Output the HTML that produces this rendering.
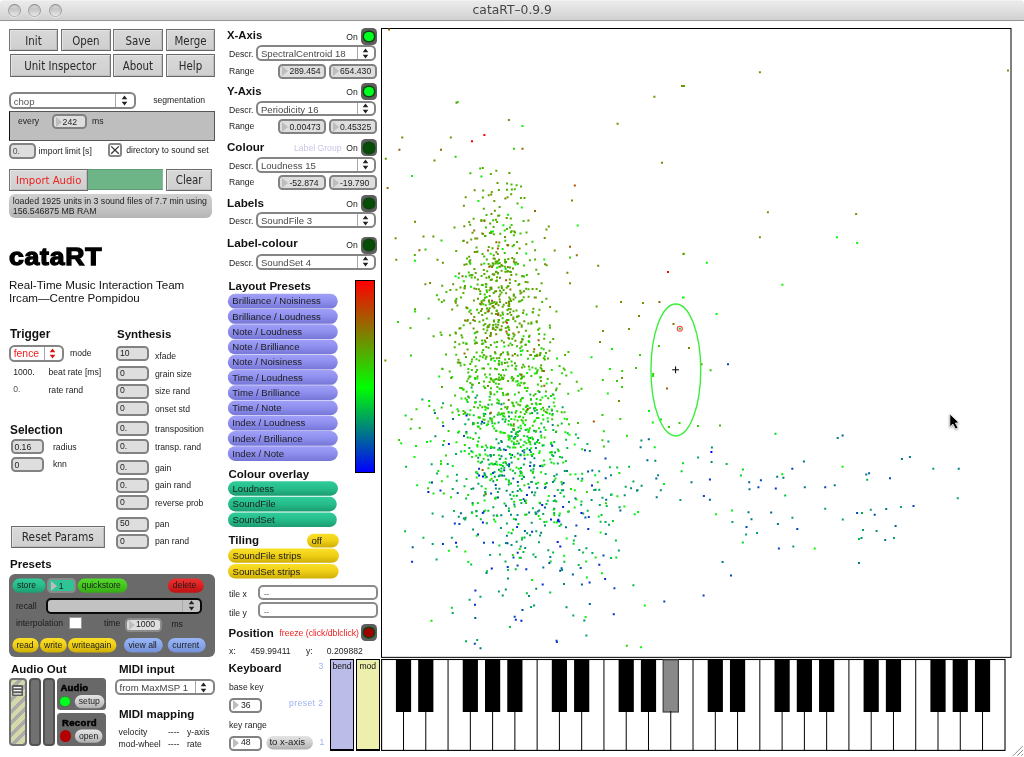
<!DOCTYPE html>
<html><head><meta charset="utf-8"><title>cataRT-0.9.9</title>
<style>
*{box-sizing:border-box;margin:0;padding:0}
html,body{width:1024px;height:757px;overflow:hidden;background:#fff}
body{position:relative;font-family:"Liberation Sans",sans-serif;color:#222}
#w{position:absolute;left:0;top:0;width:1024px;height:757px;overflow:hidden;background:#fff;will-change:transform}
#w div,#w span.t,#w svg.abs{position:absolute}
.t{white-space:nowrap}
.a{font-family:"Liberation Sans",sans-serif}
.g{font-family:"DejaVu Sans Condensed","DejaVu Sans",sans-serif}
#tb{left:0;top:0;width:1024px;height:21px;background:linear-gradient(#f6f6f6 0,#eaeaea 7%,#dfdfdf 55%,#d0d0d0 100%);border-bottom:1px solid #969696;border-radius:4px 4px 0 0}
.tl{border-radius:50%;width:13px;height:13px;top:3.8px;border:1.3px solid;border-color:#8e8e8e #9e9e9e #b4b4b4;background:radial-gradient(ellipse 50% 24% at 50% 14%,rgba(255,255,255,.4),rgba(255,255,255,0) 100%),linear-gradient(#b4b4b4,#cecece 55%,#e8e8e8);box-shadow:0 1px 0 rgba(255,255,255,.5)}
.btn{background:linear-gradient(#d9d9d9,#cfcfcf);border:1px solid #747474;border-top-color:#6a6a6a;border-bottom-color:#666;display:flex;align-items:center;justify-content:center;font-family:"DejaVu Sans Condensed","DejaVu Sans",sans-serif;white-space:nowrap;box-shadow:inset 1px 1px 0 #e4e4e4,inset -1px -1px 0 #bdbdbd}
.btn span{position:relative;top:0.5px}
.nb{background:#dedede;border:2px solid #828282;border-radius:4.5px;white-space:nowrap}
.nb span{position:absolute;top:calc(0.5px + var(--o,0px));bottom:calc(-0.5px - var(--o,0px));display:flex;align-items:center;line-height:1}
.nb .tri{position:absolute;left:2px;top:50%;margin-top:-5px;width:0;height:0;border-left:6px solid #bdbdbd;border-top:5px solid transparent;border-bottom:5px solid transparent}
.dd{background:#fff;border:2px solid #858585;border-radius:5.5px;white-space:nowrap}
.dd span{position:absolute;left:2.5px;top:1px;bottom:-1px;display:flex;align-items:center;line-height:1}
.dd b{position:absolute;right:0;top:0;bottom:0;border-left:1px solid #a8a8a8;display:block}
.dd .ar{position:absolute;left:50%;top:50%;margin:-5.5px 0 0 -4px;fill:#222}
.pill{white-space:nowrap}
.pill span{position:absolute;display:flex;align-items:center;line-height:1;color:#1c1c1c}
.led{background:#5e5e5e;border-radius:4.5px}
.led i{position:absolute;left:50%;top:50%;width:9.4px;height:9.4px;margin:-4.7px 0 0 -4.7px;border-radius:50%;display:block;box-shadow:0 0 0 1.5px rgba(0,64,0,.85)}
</style></head><body><div id="w">
<svg width="0" height="0" style="position:absolute"><defs>
<linearGradient id="pv" x1="0" y1="0" x2="0" y2="1"><stop offset="0" stop-color="#a0a0f8"/><stop offset=".5" stop-color="#8e8eee"/><stop offset="1" stop-color="#7676d6"/></linearGradient>
<linearGradient id="pg" x1="0" y1="0" x2="0" y2="1"><stop offset="0" stop-color="#30cc9a"/><stop offset=".5" stop-color="#25bd8a"/><stop offset="1" stop-color="#1c9c70"/></linearGradient>
<linearGradient id="py" x1="0" y1="0" x2="0" y2="1"><stop offset="0" stop-color="#fae028"/><stop offset=".5" stop-color="#efcf16"/><stop offset="1" stop-color="#ceae04"/></linearGradient>
<linearGradient id="pgr" x1="0" y1="0" x2="0" y2="1"><stop offset="0" stop-color="#54d82e"/><stop offset=".5" stop-color="#44c81e"/><stop offset="1" stop-color="#36aa14"/></linearGradient>
<linearGradient id="pr" x1="0" y1="0" x2="0" y2="1"><stop offset="0" stop-color="#ea3232"/><stop offset=".5" stop-color="#dc2020"/><stop offset="1" stop-color="#bc1212"/></linearGradient>
<linearGradient id="pb" x1="0" y1="0" x2="0" y2="1"><stop offset="0" stop-color="#9ab6f6"/><stop offset=".5" stop-color="#88a6ec"/><stop offset="1" stop-color="#7490d6"/></linearGradient>
<linearGradient id="pk" x1="0" y1="0" x2="0" y2="1"><stop offset="0" stop-color="#e4e4e4"/><stop offset=".5" stop-color="#cfcfcf"/><stop offset="1" stop-color="#b0b0b0"/></linearGradient>
</defs></svg>

<div id="tb"></div>
<div class="tl" style="left:7.9px"></div>
<div class="tl" style="left:28.4px"></div>
<div class="tl" style="left:48.7px"></div>
<span class="t g" style="left:472.6px;top:4.09px;font-size:12.3px;line-height:12.3px;color:#464646;font-family:'DejaVu Sans',sans-serif;">cataRT–0.9.9</span>
<div class="btn" style="left:9.0px;top:29.3px;width:49.0px;height:21.7px;"><span style="color:#2a2a2a;font-size:11.4px">Init</span></div>
<div class="btn" style="left:61.2px;top:29.3px;width:49.4px;height:21.7px;"><span style="color:#2a2a2a;font-size:11.4px">Open</span></div>
<div class="btn" style="left:113.4px;top:29.3px;width:49.2px;height:21.7px;"><span style="color:#2a2a2a;font-size:11.4px">Save</span></div>
<div class="btn" style="left:166.0px;top:29.3px;width:49.0px;height:21.7px;"><span style="color:#2a2a2a;font-size:11.4px">Merge</span></div>
<div class="btn" style="left:10.0px;top:54.3px;width:100.6px;height:23.0px;"><span style="color:#2a2a2a;font-size:11.4px">Unit Inspector</span></div>
<div class="btn" style="left:113.4px;top:54.3px;width:49.2px;height:22.5px;"><span style="color:#2a2a2a;font-size:11.4px">About</span></div>
<div class="btn" style="left:166.0px;top:54.3px;width:49.0px;height:22.5px;"><span style="color:#2a2a2a;font-size:11.4px">Help</span></div>
<div class="dd" style="left:9.2px;top:92.2px;width:127.0px;height:16.8px;"><span style="font-size:9.6px;color:#555">chop</span><b style="width:19px"><svg class="ar" width="7" height="11" viewBox="0 0 7 11"><path d="M3.5 0.6L6.3 4.2H0.7Z M3.5 10.4L6.3 6.8H0.7Z"/></svg></b></div>
<span class="t a" style="left:153.2px;top:96.48px;font-size:8.65px;line-height:8.65px;">segmentation</span>
<div class="pnl" style="left:9.0px;top:110.5px;width:206.2px;height:30.5px;background:#bebebe;border:1px solid #555;border-left-color:#111;"></div>
<span class="t a" style="left:18.0px;top:116.78px;font-size:8.65px;line-height:8.65px;">every</span>
<div class="nb" style="left:51.6px;top:114.0px;width:35.2px;height:15.3px;"><i class="tri"></i><span style="left:9px;font-size:8.65px;color:#222">242</span></div>
<span class="t a" style="left:92.0px;top:116.78px;font-size:8.65px;line-height:8.65px;">ms</span>
<div class="nb" style="left:9.2px;top:143.4px;width:26.6px;height:15.2px;"><span style="left:1.5px;font-size:8.65px;color:#555">0.</span></div>
<span class="t a" style="left:38.6px;top:147.08px;font-size:8.65px;line-height:8.65px;">import limit [s]</span>
<div class="cb" style="left:108.0px;top:143.0px;width:14.0px;height:14.3px;background:#fff;border:2px solid #868686;border-radius:3px;"><svg width="100%" height="100%" viewBox="0 0 14 14" style="position:absolute;left:-2px;top:-2px;width:14px;height:14.3px"><path d="M3.2 3.2L10.8 10.6M10.8 3.2L3.2 10.6" stroke="#333" stroke-width="1.3" fill="none"/></svg></div>
<span class="t a" style="left:126.2px;top:145.88px;font-size:8.65px;line-height:8.65px;">directory to sound set</span>
<div class="btn" style="left:9.0px;top:168.6px;width:79.4px;height:22.0px;"><span style="color:#f02020;font-size:11.2px">Import Audio</span></div>
<div class="grn" style="left:88.4px;top:169.0px;width:74.2px;height:21.2px;background:#6db487;border-top:1px solid #5f9c76;border-bottom:1px solid #5f9c76;border-right:1px solid #8ab89a;"></div>
<div class="btn" style="left:166.0px;top:168.6px;width:46.4px;height:22.0px;"><span style="color:#2a2a2a;font-size:11.4px">Clear</span></div>
<div class="st" style="left:9.0px;top:194.2px;width:203.4px;height:24.0px;background:linear-gradient(#d0d0d0,#c4c4c4 60%,#b4b4b4);border-radius:6px;"></div>
<span class="t a" style="left:12.8px;top:196.59px;font-size:8.75px;line-height:8.75px;">loaded 1925 units in 3 sound files of 7.7 min using</span>
<span class="t a" style="left:12.8px;top:207.19px;font-size:8.75px;line-height:8.75px;">156.546875 MB RAM</span>
<span class="t a" style="left:9.0px;top:245.36px;font-size:24.5px;line-height:24.5px;color:#000;font-weight:bold;-webkit-text-stroke:1.3px #000;letter-spacing:0.7px;transform-origin:0 100%;transform:scaleX(1.085);">cataRT</span>
<span class="t a" style="left:9.0px;top:278.78px;font-size:11.6px;line-height:11.6px;color:#111;">Real-Time Music Interaction Team</span>
<span class="t a" style="left:9.0px;top:292.28px;font-size:11.6px;line-height:11.6px;color:#111;">Ircam—Centre Pompidou</span>
<span class="t a" style="left:10.0px;top:328.93px;font-size:11.9px;line-height:11.9px;color:#111;font-weight:bold;">Trigger</span>
<span class="t a" style="left:117.0px;top:328.67px;font-size:11.5px;line-height:11.5px;color:#111;font-weight:bold;">Synthesis</span>
<div class="dd" style="left:9.2px;top:344.8px;width:54.4px;height:17.2px;"><span style="font-size:10.4px;color:#f02020">fence</span><b style="width:18px"><svg class="ar" width="7" height="11" viewBox="0 0 7 11"><path fill="#e01010" d="M3.5 0.6L6.3 4.2H0.7Z M3.5 10.4L6.3 6.8H0.7Z"/></svg></b></div>
<span class="t a" style="left:70.0px;top:349.28px;font-size:8.65px;line-height:8.65px;">mode</span>
<span class="t a" style="left:13.2px;top:367.68px;font-size:8.65px;line-height:8.65px;">1000.</span>
<span class="t a" style="left:48.5px;top:368.08px;font-size:8.65px;line-height:8.65px;">beat rate [ms]</span>
<span class="t a" style="left:13.2px;top:385.08px;font-size:8.65px;line-height:8.65px;color:#555;">0.</span>
<span class="t a" style="left:48.5px;top:385.68px;font-size:8.65px;line-height:8.65px;">rate rand</span>
<div class="nb" style="left:115.8px;top:346.0px;width:33.2px;height:15.0px;--o:-1px;"><span style="left:2.2px;font-size:8.65px;color:#222">10</span></div>
<span class="t a" style="left:155.0px;top:351.88px;font-size:8.65px;line-height:8.65px;">xfade</span>
<div class="nb" style="left:115.8px;top:366.0px;width:33.2px;height:15.0px;--o:-1px;"><span style="left:2.2px;font-size:8.65px;color:#222">0</span></div>
<span class="t a" style="left:155.0px;top:369.58px;font-size:8.65px;line-height:8.65px;">grain size</span>
<div class="nb" style="left:115.8px;top:383.5px;width:33.2px;height:15.0px;--o:-1px;"><span style="left:2.2px;font-size:8.65px;color:#222">0</span></div>
<span class="t a" style="left:155.0px;top:387.48px;font-size:8.65px;line-height:8.65px;">size rand</span>
<div class="nb" style="left:115.8px;top:401.0px;width:33.2px;height:15.0px;--o:-1px;"><span style="left:2.2px;font-size:8.65px;color:#222">0</span></div>
<span class="t a" style="left:155.0px;top:404.58px;font-size:8.65px;line-height:8.65px;">onset std</span>
<div class="nb" style="left:115.8px;top:421.0px;width:33.2px;height:15.0px;--o:-1px;"><span style="left:2.2px;font-size:8.65px;color:#222">0.</span></div>
<span class="t a" style="left:155.0px;top:425.28px;font-size:8.65px;line-height:8.65px;">transposition</span>
<div class="nb" style="left:115.8px;top:439.0px;width:33.2px;height:15.0px;--o:-1px;"><span style="left:2.2px;font-size:8.65px;color:#222">0.</span></div>
<span class="t a" style="left:155.0px;top:442.58px;font-size:8.65px;line-height:8.65px;">transp. rand</span>
<div class="nb" style="left:115.8px;top:460.0px;width:33.2px;height:15.0px;--o:-1px;"><span style="left:2.2px;font-size:8.65px;color:#222">0.</span></div>
<span class="t a" style="left:155.0px;top:463.88px;font-size:8.65px;line-height:8.65px;">gain</span>
<div class="nb" style="left:115.8px;top:478.0px;width:33.2px;height:15.0px;--o:-1px;"><span style="left:2.2px;font-size:8.65px;color:#222">0.</span></div>
<span class="t a" style="left:155.0px;top:481.18px;font-size:8.65px;line-height:8.65px;">gain rand</span>
<div class="nb" style="left:115.8px;top:495.0px;width:33.2px;height:15.0px;--o:-1px;"><span style="left:2.2px;font-size:8.65px;color:#222">0</span></div>
<span class="t a" style="left:155.0px;top:498.68px;font-size:8.65px;line-height:8.65px;">reverse prob</span>
<div class="nb" style="left:115.8px;top:516.5px;width:33.2px;height:15.0px;--o:-1px;"><span style="left:2.2px;font-size:8.65px;color:#222">50</span></div>
<span class="t a" style="left:155.0px;top:519.58px;font-size:8.65px;line-height:8.65px;">pan</span>
<div class="nb" style="left:115.8px;top:534.0px;width:33.2px;height:15.0px;--o:-1px;"><span style="left:2.2px;font-size:8.65px;color:#222">0</span></div>
<span class="t a" style="left:155.0px;top:537.38px;font-size:8.65px;line-height:8.65px;">pan rand</span>
<span class="t a" style="left:10.0px;top:424.57px;font-size:11.85px;line-height:11.85px;color:#111;font-weight:bold;">Selection</span>
<div class="nb" style="left:10.8px;top:439.4px;width:33.4px;height:14.8px;"><span style="left:1.6px;font-size:8.65px;color:#222">0.16</span></div>
<span class="t a" style="left:53.0px;top:443.48px;font-size:8.65px;line-height:8.65px;">radius</span>
<div class="nb" style="left:10.8px;top:457.4px;width:33.4px;height:14.8px;"><span style="left:1.6px;font-size:8.65px;color:#222">0</span></div>
<span class="t a" style="left:53.0px;top:460.48px;font-size:8.65px;line-height:8.65px;">knn</span>
<div class="btn" style="left:10.8px;top:526.0px;width:94.0px;height:21.5px;"><span style="color:#2a2a2a;font-size:11.8px">Reset Params</span></div>
<span class="t a" style="left:10.0px;top:558.67px;font-size:11.5px;line-height:11.5px;color:#111;font-weight:bold;">Presets</span>
<div class="pp" style="left:8.6px;top:573.6px;width:206.6px;height:83.6px;background:#6a6a6a;border-radius:6px;"></div>
<div class="pill" style="left:12px;top:578px;width:34px;height:15px"><svg width="34" height="15" style="position:absolute;left:0;top:0"><rect x="0.40" y="0.60" width="33.20" height="14.20" rx="7.10" fill="url(#pg)"/></svg><span style="font-size:8.65px;left:4.9px;top:0.60px;height:14.20px">store</span></div>
<div class="nb" style="left:47.2px;top:578.2px;width:28.6px;height:15.0px;background:#2fc496;border-color:#8a8a8a;"><i class="tri"></i><span style="left:9.5px;font-size:8.65px;color:#222">1</span></div>
<div class="pill" style="left:77px;top:578px;width:51px;height:15px"><svg width="51" height="15" style="position:absolute;left:0;top:0"><rect x="0.60" y="0.60" width="49.80" height="14.20" rx="7.10" fill="url(#pgr)"/></svg><span style="font-size:8.65px;left:4.6px;top:0.60px;height:14.20px">quickstore</span></div>
<div class="pill" style="left:167px;top:578px;width:37px;height:15px"><svg width="37" height="15" style="position:absolute;left:0;top:0"><rect x="0.80" y="0.60" width="36.00" height="14.20" rx="7.10" fill="url(#pr)"/></svg><span style="font-size:8.65px;left:5.8px;top:0.60px;height:14.20px">delete</span></div>
<span class="t a" style="left:16.0px;top:601.68px;font-size:8.65px;line-height:8.65px;color:#1a1a1a;">recall</span>
<div class="dd" style="left:46.4px;top:597.8px;width:155.8px;height:16.4px;background:#c2c2c2;border:2px solid #0a0a0a;border-radius:5px;"><span style="font-size:9.6px;color:#555"></span><b style="width:18px"><svg class="ar" width="7" height="11" viewBox="0 0 7 11"><path d="M3.5 0.6L6.3 4.2H0.7Z M3.5 10.4L6.3 6.8H0.7Z"/></svg></b></div>
<span class="t a" style="left:16.0px;top:619.28px;font-size:8.65px;line-height:8.65px;color:#1a1a1a;">interpolation</span>
<div class="cb2" style="left:68.6px;top:616.6px;width:13.0px;height:12.6px;background:#fff;border:1px solid #999;"></div>
<span class="t a" style="left:104.0px;top:619.28px;font-size:8.65px;line-height:8.65px;color:#1a1a1a;">time</span>
<div class="nb" style="left:125.4px;top:617.8px;width:36.4px;height:14.4px;border-color:#8c8c8c;--o:-0.8px;"><i class="tri"></i><span style="left:8.5px;font-size:8.65px;color:#222">1000</span></div>
<span class="t a" style="left:171.4px;top:620.08px;font-size:8.65px;line-height:8.65px;color:#1a1a1a;">ms</span>
<div class="pill" style="left:12px;top:638px;width:27px;height:15px"><svg width="27" height="15" style="position:absolute;left:0;top:0"><rect x="0.40" y="0.00" width="26.20" height="14.40" rx="7.20" fill="url(#py)"/></svg><span style="font-size:8.65px;left:4.4px;top:0.00px;height:14.40px">read</span></div>
<div class="pill" style="left:40px;top:638px;width:27px;height:15px"><svg width="27" height="15" style="position:absolute;left:0;top:0"><rect x="0.00" y="0.00" width="26.80" height="14.40" rx="7.20" fill="url(#py)"/></svg><span style="font-size:8.65px;left:4.0px;top:0.00px;height:14.40px">write</span></div>
<div class="pill" style="left:68px;top:638px;width:49px;height:15px"><svg width="49" height="15" style="position:absolute;left:0;top:0"><rect x="0.00" y="0.00" width="48.40" height="14.40" rx="7.20" fill="url(#py)"/></svg><span style="font-size:8.65px;left:4.0px;top:0.00px;height:14.40px">writeagain</span></div>
<div class="pill" style="left:124px;top:638px;width:39px;height:15px"><svg width="39" height="15" style="position:absolute;left:0;top:0"><rect x="0.00" y="0.00" width="38.80" height="14.40" rx="7.20" fill="url(#pb)"/></svg><span style="font-size:8.65px;left:4.5px;top:0.00px;height:14.40px">view all</span></div>
<div class="pill" style="left:167px;top:638px;width:39px;height:15px"><svg width="39" height="15" style="position:absolute;left:0;top:0"><rect x="0.80" y="0.00" width="37.80" height="14.40" rx="7.20" fill="url(#pb)"/></svg><span style="font-size:8.65px;left:5.3px;top:0.00px;height:14.40px">current</span></div>
<span class="t a" style="left:11.0px;top:663.67px;font-size:11.5px;line-height:11.5px;color:#111;font-weight:bold;">Audio Out</span>
<div class="sl" style="left:9.0px;top:678.0px;width:17.6px;height:68.0px;border:2px solid #727272;border-radius:4px;background:repeating-linear-gradient(135deg,#d5d9aa 0,#d5d9aa 4.5px,#acacaa 4.5px,#acacaa 8.1px);"></div>
<div class="slh" style="left:12.0px;top:685.0px;width:11.2px;height:11.2px;background:#5e5e5e;border-radius:1px;"><svg width="11.2" height="11.2" viewBox="0 0 11.2 11.2" style="position:absolute;left:0;top:0"><path d="M1.5 2.6H9.4M1.5 5.7H9.4M1.5 8.8H9.4" stroke="#f6f6f6" stroke-width="1.2"/></svg></div>
<div class="mt" style="left:29.2px;top:678.0px;width:12.0px;height:68.0px;background:#717171;border:2px solid #525252;border-radius:4px;"></div>
<div class="mt" style="left:43.0px;top:678.0px;width:11.8px;height:68.0px;background:#717171;border:2px solid #525252;border-radius:4px;"></div>
<div class="ap" style="left:57.3px;top:677.6px;width:48.3px;height:32.0px;background:#686868;border-radius:3.5px;"></div>
<span class="t a" style="left:60.5px;top:683.07px;font-size:9.6px;line-height:9.6px;color:#000;font-weight:bold;-webkit-text-stroke:0.5px #000;letter-spacing:0.1px;">Audio</span>
<div class="l1" style="left:59.3px;top:695.8px;width:11.4px;height:11.4px;border-radius:50%;background:#00ff1e;border:1.5px solid #3a7a3a;"></div>
<div class="pill" style="left:74px;top:695px;width:31px;height:14px"><svg width="31" height="14" style="position:absolute;left:0;top:0"><rect x="0.80" y="0.00" width="29.60" height="13.20" rx="6.60" fill="url(#pk)"/></svg><span style="font-size:8.65px;left:4.8px;top:0.00px;height:13.20px">setup</span></div>
<div class="ap" style="left:57.3px;top:712.8px;width:48.3px;height:33.2px;background:#686868;border-radius:3.5px;"></div>
<span class="t a" style="left:62.0px;top:718.07px;font-size:9.6px;line-height:9.6px;color:#000;font-weight:bold;-webkit-text-stroke:0.5px #000;letter-spacing:0.3px;">Record</span>
<div class="l2" style="left:59.6px;top:730.0px;width:11.8px;height:11.8px;border-radius:50%;background:#b40000;"></div>
<div class="pill" style="left:75px;top:729px;width:28px;height:14px"><svg width="28" height="14" style="position:absolute;left:0;top:0"><rect x="0.00" y="0.60" width="27.40" height="13.20" rx="6.60" fill="url(#pk)"/></svg><span style="font-size:8.65px;left:4.0px;top:0.60px;height:13.20px">open</span></div>
<span class="t a" style="left:119.0px;top:663.67px;font-size:11.5px;line-height:11.5px;color:#111;font-weight:bold;">MIDI input</span>
<div class="dd" style="left:115.0px;top:679.0px;width:99.6px;height:16.4px;"><span style="font-size:9.6px;color:#444">from MaxMSP 1</span><b style="width:18px"><svg class="ar" width="7" height="11" viewBox="0 0 7 11"><path d="M3.5 0.6L6.3 4.2H0.7Z M3.5 10.4L6.3 6.8H0.7Z"/></svg></b></div>
<span class="t a" style="left:119.0px;top:709.27px;font-size:11.5px;line-height:11.5px;color:#111;font-weight:bold;">MIDI mapping</span>
<span class="t a" style="left:118.6px;top:728.28px;font-size:8.65px;line-height:8.65px;">velocity</span>
<span class="t a" style="left:168.0px;top:728.28px;font-size:8.65px;line-height:8.65px;">----</span>
<span class="t a" style="left:187.0px;top:728.28px;font-size:8.65px;line-height:8.65px;">y-axis</span>
<span class="t a" style="left:118.6px;top:739.68px;font-size:8.65px;line-height:8.65px;">mod-wheel</span>
<span class="t a" style="left:168.0px;top:739.68px;font-size:8.65px;line-height:8.65px;">----</span>
<span class="t a" style="left:187.0px;top:739.68px;font-size:8.65px;line-height:8.65px;">rate</span>
<span class="t a" style="left:227.0px;top:30.23px;font-size:11.3px;line-height:11.3px;color:#111;font-weight:bold;">X-Axis</span>
<span class="t a" style="left:346.2px;top:32.68px;font-size:8.65px;line-height:8.65px;">On</span>
<div class="led" style="left:360.8px;top:27.9px;width:16.4px;height:17.1px;"><i style="background:#00ff1e"></i></div>
<span class="t a" style="left:229.0px;top:50.48px;font-size:8.65px;line-height:8.65px;">Descr.</span>
<div class="dd" style="left:256.4px;top:45.4px;width:120.0px;height:15.8px;"><span style="font-size:9.6px;color:#4a4a4a">SpectralCentroid 18</span><b style="width:17px"><svg class="ar" width="7" height="11" viewBox="0 0 7 11"><path d="M3.5 0.6L6.3 4.2H0.7Z M3.5 10.4L6.3 6.8H0.7Z"/></svg></b></div>
<span class="t a" style="left:229.0px;top:66.68px;font-size:8.65px;line-height:8.65px;">Range</span>
<div class="nb" style="left:278.4px;top:63.8px;width:47.6px;height:15.0px;text-align:right;"><i class="tri"></i><span style="left:9px;font-size:8.65px;color:#222">289.454</span></div>
<div class="nb" style="left:329.0px;top:63.8px;width:47.6px;height:15.0px;"><i class="tri"></i><span style="left:9px;font-size:8.65px;color:#222">654.430</span></div>
<span class="t a" style="left:227.0px;top:85.53px;font-size:11.3px;line-height:11.3px;color:#111;font-weight:bold;">Y-Axis</span>
<span class="t a" style="left:346.2px;top:87.98px;font-size:8.65px;line-height:8.65px;">On</span>
<div class="led" style="left:360.8px;top:83.2px;width:16.4px;height:17.1px;"><i style="background:#00ff1e"></i></div>
<span class="t a" style="left:229.0px;top:105.78px;font-size:8.65px;line-height:8.65px;">Descr.</span>
<div class="dd" style="left:256.4px;top:100.7px;width:120.0px;height:15.8px;"><span style="font-size:9.6px;color:#4a4a4a">Periodicity 16</span><b style="width:17px"><svg class="ar" width="7" height="11" viewBox="0 0 7 11"><path d="M3.5 0.6L6.3 4.2H0.7Z M3.5 10.4L6.3 6.8H0.7Z"/></svg></b></div>
<span class="t a" style="left:229.0px;top:121.98px;font-size:8.65px;line-height:8.65px;">Range</span>
<div class="nb" style="left:278.4px;top:119.1px;width:47.6px;height:15.0px;text-align:right;"><i class="tri"></i><span style="left:9px;font-size:8.65px;color:#222">0.00473</span></div>
<div class="nb" style="left:329.0px;top:119.1px;width:47.6px;height:15.0px;"><i class="tri"></i><span style="left:9px;font-size:8.65px;color:#222">0.45325</span></div>
<span class="t a" style="left:227.0px;top:141.38px;font-size:11.6px;line-height:11.6px;color:#111;font-weight:bold;">Colour</span>
<span class="t a" style="left:346.2px;top:144.08px;font-size:8.65px;line-height:8.65px;">On</span>
<div class="led" style="left:360.8px;top:139.3px;width:16.4px;height:17.1px;"><i style="background:#064d06"></i></div>
<span class="t a" style="left:229.0px;top:161.88px;font-size:8.65px;line-height:8.65px;">Descr.</span>
<div class="dd" style="left:256.4px;top:156.8px;width:120.0px;height:15.8px;"><span style="font-size:9.6px;color:#4a4a4a">Loudness 15</span><b style="width:17px"><svg class="ar" width="7" height="11" viewBox="0 0 7 11"><path d="M3.5 0.6L6.3 4.2H0.7Z M3.5 10.4L6.3 6.8H0.7Z"/></svg></b></div>
<span class="t a" style="left:229.0px;top:178.08px;font-size:8.65px;line-height:8.65px;">Range</span>
<div class="nb" style="left:278.4px;top:175.2px;width:47.6px;height:15.0px;text-align:right;"><i class="tri"></i><span style="left:9px;font-size:8.65px;color:#222">-52.874</span></div>
<div class="nb" style="left:329.0px;top:175.2px;width:47.6px;height:15.0px;"><i class="tri"></i><span style="left:9px;font-size:8.65px;color:#222">-19.790</span></div>
<span class="t a" style="left:294.0px;top:144.08px;font-size:8.65px;line-height:8.65px;color:#cbc4e4;">Label Group</span>
<span class="t a" style="left:227.0px;top:196.80px;font-size:11.7px;line-height:11.7px;color:#111;font-weight:bold;">Labels</span>
<span class="t a" style="left:346.2px;top:199.58px;font-size:8.65px;line-height:8.65px;">On</span>
<div class="led" style="left:360.8px;top:194.8px;width:16.4px;height:17.1px;"><i style="background:#064d06"></i></div>
<span class="t a" style="left:229.0px;top:217.38px;font-size:8.65px;line-height:8.65px;">Descr.</span>
<div class="dd" style="left:256.4px;top:212.3px;width:120.0px;height:15.8px;"><span style="font-size:9.6px;color:#4a4a4a">SoundFile 3</span><b style="width:17px"><svg class="ar" width="7" height="11" viewBox="0 0 7 11"><path d="M3.5 0.6L6.3 4.2H0.7Z M3.5 10.4L6.3 6.8H0.7Z"/></svg></b></div>
<span class="t a" style="left:227.0px;top:238.41px;font-size:11.8px;line-height:11.8px;color:#111;font-weight:bold;">Label-colour</span>
<span class="t a" style="left:346.2px;top:241.28px;font-size:8.65px;line-height:8.65px;">On</span>
<div class="led" style="left:360.8px;top:236.5px;width:16.4px;height:17.1px;"><i style="background:#064d06"></i></div>
<span class="t a" style="left:229.0px;top:259.08px;font-size:8.65px;line-height:8.65px;">Descr.</span>
<div class="dd" style="left:256.4px;top:254.0px;width:120.0px;height:15.8px;"><span style="font-size:9.6px;color:#4a4a4a">SoundSet 4</span><b style="width:17px"><svg class="ar" width="7" height="11" viewBox="0 0 7 11"><path d="M3.5 0.6L6.3 4.2H0.7Z M3.5 10.4L6.3 6.8H0.7Z"/></svg></b></div>
<span class="t a" style="left:228.5px;top:280.87px;font-size:11.5px;line-height:11.5px;color:#111;font-weight:bold;">Layout Presets</span>
<div class="pill" style="left:227px;top:293px;width:111px;height:16px"><svg width="111" height="16" style="position:absolute;left:0;top:0"><rect x="0.80" y="0.80" width="110.00" height="14.80" rx="7.40" fill="url(#pv)"/></svg><span style="font-size:9.6px;left:5.3px;top:0.80px;height:14.80px">Brilliance / Noisiness</span></div>
<div class="pill" style="left:227px;top:309px;width:111px;height:15px"><svg width="111" height="15" style="position:absolute;left:0;top:0"><rect x="0.80" y="0.04" width="110.00" height="14.80" rx="7.40" fill="url(#pv)"/></svg><span style="font-size:9.6px;left:5.3px;top:0.04px;height:14.80px">Brilliance / Loudness</span></div>
<div class="pill" style="left:227px;top:324px;width:111px;height:16px"><svg width="111" height="16" style="position:absolute;left:0;top:0"><rect x="0.80" y="0.28" width="110.00" height="14.80" rx="7.40" fill="url(#pv)"/></svg><span style="font-size:9.6px;left:5.3px;top:0.28px;height:14.80px">Note / Loudness</span></div>
<div class="pill" style="left:227px;top:339px;width:111px;height:16px"><svg width="111" height="16" style="position:absolute;left:0;top:0"><rect x="0.80" y="0.52" width="110.00" height="14.80" rx="7.40" fill="url(#pv)"/></svg><span style="font-size:9.6px;left:5.3px;top:0.52px;height:14.80px">Note / Brilliance</span></div>
<div class="pill" style="left:227px;top:354px;width:111px;height:16px"><svg width="111" height="16" style="position:absolute;left:0;top:0"><rect x="0.80" y="0.76" width="110.00" height="14.80" rx="7.40" fill="url(#pv)"/></svg><span style="font-size:9.6px;left:5.3px;top:0.76px;height:14.80px">Note / Noisiness</span></div>
<div class="pill" style="left:227px;top:370px;width:111px;height:15px"><svg width="111" height="15" style="position:absolute;left:0;top:0"><rect x="0.80" y="0.00" width="110.00" height="14.80" rx="7.40" fill="url(#pv)"/></svg><span style="font-size:9.6px;left:5.3px;top:0.00px;height:14.80px">Time / Loudness</span></div>
<div class="pill" style="left:227px;top:385px;width:111px;height:16px"><svg width="111" height="16" style="position:absolute;left:0;top:0"><rect x="0.80" y="0.24" width="110.00" height="14.80" rx="7.40" fill="url(#pv)"/></svg><span style="font-size:9.6px;left:5.3px;top:0.24px;height:14.80px">Time / Brilliance</span></div>
<div class="pill" style="left:227px;top:400px;width:111px;height:16px"><svg width="111" height="16" style="position:absolute;left:0;top:0"><rect x="0.80" y="0.48" width="110.00" height="14.80" rx="7.40" fill="url(#pv)"/></svg><span style="font-size:9.6px;left:5.3px;top:0.48px;height:14.80px">Time / Note</span></div>
<div class="pill" style="left:227px;top:415px;width:111px;height:16px"><svg width="111" height="16" style="position:absolute;left:0;top:0"><rect x="0.80" y="0.72" width="110.00" height="14.80" rx="7.40" fill="url(#pv)"/></svg><span style="font-size:9.6px;left:5.3px;top:0.72px;height:14.80px">Index / Loudness</span></div>
<div class="pill" style="left:227px;top:430px;width:111px;height:16px"><svg width="111" height="16" style="position:absolute;left:0;top:0"><rect x="0.80" y="0.96" width="110.00" height="14.80" rx="7.40" fill="url(#pv)"/></svg><span style="font-size:9.6px;left:5.3px;top:0.96px;height:14.80px">Index / Brilliance</span></div>
<div class="pill" style="left:227px;top:446px;width:111px;height:16px"><svg width="111" height="16" style="position:absolute;left:0;top:0"><rect x="0.80" y="0.20" width="110.00" height="14.80" rx="7.40" fill="url(#pv)"/></svg><span style="font-size:9.6px;left:5.3px;top:0.20px;height:14.80px">Index / Note</span></div>
<div class="cbar" style="left:355.2px;top:280.0px;width:19.4px;height:193.4px;border:1px solid #000;background:linear-gradient(#ff0000 0%,#00ff00 55.7%,#0000ff 100%);"></div>
<span class="t a" style="left:228.5px;top:468.87px;font-size:11.5px;line-height:11.5px;color:#111;font-weight:bold;">Colour overlay</span>
<div class="pill" style="left:228px;top:481px;width:110px;height:15px"><svg width="110" height="15" style="position:absolute;left:0;top:0"><rect x="0.00" y="0.30" width="110.00" height="14.40" rx="7.20" fill="url(#pg)"/></svg><span style="font-size:9.6px;left:4.5px;top:0.30px;height:14.40px">Loudness</span></div>
<div class="pill" style="left:228px;top:496px;width:109px;height:16px"><svg width="109" height="16" style="position:absolute;left:0;top:0"><rect x="0.00" y="0.80" width="108.80" height="14.60" rx="7.30" fill="url(#pg)"/></svg><span style="font-size:9.6px;left:4.5px;top:0.80px;height:14.60px">SoundFile</span></div>
<div class="pill" style="left:228px;top:512px;width:109px;height:15px"><svg width="109" height="15" style="position:absolute;left:0;top:0"><rect x="0.00" y="0.50" width="108.80" height="14.50" rx="7.25" fill="url(#pg)"/></svg><span style="font-size:9.6px;left:4.5px;top:0.50px;height:14.50px">SoundSet</span></div>
<span class="t a" style="left:228.5px;top:534.87px;font-size:11.5px;line-height:11.5px;color:#111;font-weight:bold;">Tiling</span>
<div class="pill" style="left:307px;top:533px;width:32px;height:15px"><svg width="32" height="15" style="position:absolute;left:0;top:0"><rect x="0.00" y="0.70" width="31.80" height="13.90" rx="6.95" fill="url(#py)"/></svg><span style="font-size:9.6px;left:4.5px;top:0.70px;height:13.90px">off</span></div>
<div class="pill" style="left:228px;top:548px;width:111px;height:15px"><svg width="111" height="15" style="position:absolute;left:0;top:0"><rect x="0.00" y="0.60" width="111.00" height="14.20" rx="7.10" fill="url(#py)"/></svg><span style="font-size:9.6px;left:4.5px;top:0.60px;height:14.20px">SoundFile strips</span></div>
<div class="pill" style="left:228px;top:564px;width:111px;height:15px"><svg width="111" height="15" style="position:absolute;left:0;top:0"><rect x="0.00" y="0.00" width="110.60" height="14.60" rx="7.30" fill="url(#py)"/></svg><span style="font-size:9.6px;left:4.5px;top:0.00px;height:14.60px">SoundSet strips</span></div>
<span class="t a" style="left:229.0px;top:590.08px;font-size:8.65px;line-height:8.65px;">tile x</span>
<div class="tb" style="left:258.4px;top:584.8px;width:119.6px;height:15.6px;background:#fff;border:2px solid #8a8a8a;border-radius:5px;"><span style="position:absolute;left:3.5px;top:3.5px;font-size:8px;line-height:8px;color:#444">--</span></div>
<span class="t a" style="left:229.0px;top:608.88px;font-size:8.65px;line-height:8.65px;">tile y</span>
<div class="tb" style="left:258.4px;top:602.4px;width:119.6px;height:15.4px;background:#fff;border:2px solid #8a8a8a;border-radius:5px;"><span style="position:absolute;left:3.5px;top:3.5px;font-size:8px;line-height:8px;color:#444">--</span></div>
<span class="t a" style="left:228.5px;top:627.87px;font-size:11.5px;line-height:11.5px;color:#111;font-weight:bold;">Position</span>
<span class="t a" style="left:279.4px;top:629.08px;font-size:8.65px;line-height:8.65px;color:#f02020;">freeze (click/dblclick)</span>
<div class="led" style="left:360.6px;top:624.2px;width:16.6px;height:16.8px;"><i style="background:#a00000"></i></div>
<span class="t a" style="left:229.0px;top:646.68px;font-size:8.65px;line-height:8.65px;">x:</span>
<span class="t a" style="left:250.5px;top:646.68px;font-size:8.65px;line-height:8.65px;">459.99411</span>
<span class="t a" style="left:306.0px;top:646.68px;font-size:8.65px;line-height:8.65px;">y:</span>
<span class="t a" style="left:326.8px;top:646.68px;font-size:8.65px;line-height:8.65px;">0.209882</span>
<span class="t a" style="left:228.5px;top:662.67px;font-size:11.5px;line-height:11.5px;color:#111;font-weight:bold;">Keyboard</span>
<span class="t a" style="left:318.4px;top:661.68px;font-size:8.65px;line-height:8.65px;color:#9db0f0;">3</span>
<span class="t a" style="left:229.0px;top:682.88px;font-size:8.65px;line-height:8.65px;">base key</span>
<div class="nb" style="left:229.0px;top:698.0px;width:33.4px;height:14.8px;background:#fff;--o:-1px;"><i class="tri"></i><span style="left:10px;font-size:8.65px;color:#222">36</span></div>
<span class="t a" style="left:289.0px;top:699.28px;font-size:8.65px;line-height:8.65px;color:#9db0f0;letter-spacing:0.4px;">preset 2</span>
<span class="t a" style="left:229.0px;top:720.88px;font-size:8.65px;line-height:8.65px;">key range</span>
<div class="nb" style="left:229.0px;top:735.8px;width:33.4px;height:14.8px;background:#fff;--o:-1px;"><i class="tri"></i><span style="left:10px;font-size:8.65px;color:#222">48</span></div>
<div class="pill" style="left:266px;top:736px;width:47px;height:14px"><svg width="47" height="14" style="position:absolute;left:0;top:0"><rect x="0.40" y="0.00" width="46.60" height="13.40" rx="6.70" fill="url(#pk)"/></svg><span style="font-size:9.6px;left:3.4px;top:-1.00px;height:13.40px">to x-axis</span></div>
<span class="t a" style="left:319.4px;top:738.28px;font-size:8.65px;line-height:8.65px;color:#9db0f0;">1</span>
<div class="bend" style="left:329.8px;top:659.2px;width:24.4px;height:91.8px;background:#bcbce8;border:1px solid #000;border-bottom-width:2px;"></div>
<span class="t a" style="left:332.4px;top:661.88px;font-size:8.65px;line-height:8.65px;color:#111;">bend</span>
<div class="mod" style="left:356.0px;top:659.2px;width:23.8px;height:91.8px;background:#ecf0ac;border:1px solid #000;border-bottom-width:2px;"></div>
<span class="t a" style="left:359.4px;top:661.88px;font-size:8.65px;line-height:8.65px;color:#111;">mod</span>
<svg class="abs" style="left:381px;top:28px" width="631" height="631" viewBox="381 28 631 631">
<rect x="381.5" y="28.5" width="629.5" height="628.85" fill="#fff" stroke="#000" stroke-width="1"/>
<path fill="#0000ff" d="M556.9 520.1h2v2h-2zM535.2 512.8h2v2h-2zM482.0 475.4h2v2h-2zM465.5 414.5h2v2h-2zM580.5 512.0h2v2h-2zM710.4 450.9h2v2h-2z"/>
<path fill="#0018e7" d="M490.8 567.5h2v2h-2zM591.0 484.4h2v2h-2zM559.3 545.4h2v2h-2zM557.3 518.7h2v2h-2zM541.2 504.0h2v2h-2zM481.9 521.5h2v2h-2zM520.4 619.8h2v2h-2zM455.0 541.7h2v2h-2zM478.1 474.4h2v2h-2zM556.7 541.1h2v2h-2zM427.4 491.1h2v2h-2zM508.2 463.3h2v2h-2zM481.1 420.7h2v2h-2z"/>
<path fill="#0030cf" d="M501.0 474.4h2v2h-2zM562.1 505.9h2v2h-2zM411.1 560.8h2v2h-2zM528.2 486.5h2v2h-2zM474.0 603.8h2v2h-2zM492.1 472.1h2v2h-2zM541.7 583.6h2v2h-2zM558.3 520.6h2v2h-2zM514.8 618.7h2v2h-2zM481.8 511.9h2v2h-2zM529.1 465.1h2v2h-2zM526.0 493.9h2v2h-2zM492.0 541.5h2v2h-2zM525.3 568.2h2v2h-2zM522.6 498.2h2v2h-2zM588.6 581.5h2v2h-2zM539.2 464.9h2v2h-2zM587.3 527.9h2v2h-2zM453.8 522.5h2v2h-2zM612.8 613.3h2v2h-2zM550.0 518.5h2v2h-2zM478.1 467.7h2v2h-2zM551.2 444.7h2v2h-2zM447.9 443.0h2v2h-2zM442.2 424.9h2v2h-2zM439.5 489.4h2v2h-2zM474.4 589.5h2v2h-2zM441.9 542.9h2v2h-2zM506.7 565.9h2v2h-2zM477.0 533.6h2v2h-2zM531.1 530.8h2v2h-2zM431.0 481.5h2v2h-2zM511.1 454.1h2v2h-2zM504.7 449.1h2v2h-2zM516.1 525.9h2v2h-2zM598.3 563.7h2v2h-2zM604.1 578.1h2v2h-2zM516.7 551.7h2v2h-2zM506.4 542.3h2v2h-2zM708.9 478.4h2v2h-2zM774.8 487.5h2v2h-2z"/>
<path fill="#0048b7" d="M604.7 477.2h2v2h-2zM521.5 609.1h2v2h-2zM613.4 587.2h2v2h-2zM512.5 556.4h2v2h-2zM482.9 510.5h2v2h-2zM483.0 541.7h2v2h-2zM516.8 481.1h2v2h-2zM555.9 641.0h2v2h-2zM548.4 561.9h2v2h-2zM519.5 454.3h2v2h-2zM602.5 554.5h2v2h-2zM555.6 639.7h2v2h-2zM497.0 496.4h2v2h-2zM584.0 449.2h2v2h-2zM490.1 492.4h2v2h-2zM513.7 615.8h2v2h-2zM562.6 482.0h2v2h-2zM458.4 523.1h2v2h-2zM503.2 469.3h2v2h-2zM553.6 494.9h2v2h-2zM530.4 481.0h2v2h-2zM463.0 435.1h2v2h-2zM587.8 515.9h2v2h-2zM473.8 642.7h2v2h-2zM574.5 497.5h2v2h-2zM523.7 457.8h2v2h-2zM528.8 449.1h2v2h-2zM495.9 514.6h2v2h-2zM489.5 454.0h2v2h-2zM579.7 567.0h2v2h-2zM587.1 470.6h2v2h-2zM516.6 564.6h2v2h-2zM559.2 569.8h2v2h-2zM494.7 484.1h2v2h-2zM533.2 464.3h2v2h-2zM575.4 524.4h2v2h-2zM471.0 511.5h2v2h-2zM604.5 457.4h2v2h-2zM702.9 495.0h2v2h-2zM727.0 363.2h2v2h-2zM889.0 477.3h2v2h-2zM791.3 467.8h2v2h-2zM824.2 486.3h2v2h-2zM759.9 479.3h2v2h-2zM757.4 486.3h2v2h-2zM856.1 511.9h2v2h-2zM873.7 513.8h2v2h-2zM912.5 505.0h2v2h-2zM796.3 528.1h2v2h-2zM777.9 547.6h2v2h-2zM745.5 526.1h2v2h-2zM730.0 574.5h2v2h-2zM702.6 594.4h2v2h-2zM663.3 600.4h2v2h-2z"/>
<path fill="#00609f" d="M560.6 567.3h2v2h-2zM584.4 516.4h2v2h-2zM514.9 518.6h2v2h-2zM474.3 617.1h2v2h-2zM591.3 469.5h2v2h-2zM498.6 447.3h2v2h-2zM571.9 573.4h2v2h-2zM523.9 530.1h2v2h-2zM411.7 546.2h2v2h-2zM544.0 506.5h2v2h-2zM485.6 476.0h2v2h-2zM512.3 477.5h2v2h-2zM533.0 407.5h2v2h-2zM475.4 471.6h2v2h-2zM508.0 465.2h2v2h-2zM543.9 487.1h2v2h-2zM512.8 437.4h2v2h-2zM524.0 499.9h2v2h-2zM588.8 602.9h2v2h-2zM459.9 512.2h2v2h-2zM521.7 450.0h2v2h-2zM580.9 583.4h2v2h-2zM605.2 498.8h2v2h-2zM456.7 492.1h2v2h-2zM505.0 504.7h2v2h-2zM841.6 434.6h2v2h-2zM610.1 493.8h2v2h-2zM655.3 477.5h2v2h-2zM748.2 481.3h2v2h-2zM894.6 524.9h2v2h-2zM647.8 438.3h2v2h-2zM646.4 459.2h2v2h-2zM770.2 511.4h2v2h-2zM708.9 498.7h2v2h-2zM619.4 509.6h2v2h-2zM868.1 472.2h2v2h-2z"/>
<path fill="#007887" d="M539.6 430.7h2v2h-2zM519.9 467.1h2v2h-2zM452.0 417.9h2v2h-2zM498.6 474.6h2v2h-2zM523.3 451.4h2v2h-2zM541.4 465.3h2v2h-2zM540.1 531.7h2v2h-2zM538.2 509.4h2v2h-2zM472.2 422.0h2v2h-2zM485.5 572.0h2v2h-2zM565.0 526.3h2v2h-2zM472.3 487.4h2v2h-2zM479.5 647.2h2v2h-2zM531.0 491.2h2v2h-2zM514.2 436.1h2v2h-2zM529.5 461.5h2v2h-2zM505.9 534.8h2v2h-2zM528.1 511.5h2v2h-2zM519.4 470.5h2v2h-2zM549.3 555.9h2v2h-2zM507.7 464.4h2v2h-2zM522.9 476.1h2v2h-2zM500.4 403.3h2v2h-2zM574.4 534.9h2v2h-2zM500.3 514.2h2v2h-2zM519.8 472.2h2v2h-2zM500.5 455.2h2v2h-2zM502.9 448.6h2v2h-2zM433.9 412.1h2v2h-2zM553.2 507.7h2v2h-2zM544.6 486.0h2v2h-2zM465.4 431.0h2v2h-2zM542.3 566.6h2v2h-2zM604.8 533.1h2v2h-2zM690.5 481.2h2v2h-2zM802.9 460.4h2v2h-2zM655.7 496.2h2v2h-2zM776.2 475.8h2v2h-2zM865.3 473.4h2v2h-2zM636.0 489.4h2v2h-2zM639.6 446.2h2v2h-2zM836.7 437.0h2v2h-2zM900.9 457.9h2v2h-2zM908.9 455.9h2v2h-2zM957.7 467.8h2v2h-2zM782.4 476.8h2v2h-2zM803.8 486.3h2v2h-2zM833.7 484.3h2v2h-2zM748.5 488.3h2v2h-2zM885.2 507.9h2v2h-2zM884.2 538.9h2v2h-2zM858.0 562.0h2v2h-2zM776.9 523.1h2v2h-2zM747.5 511.2h2v2h-2zM750.5 518.2h2v2h-2zM721.6 561.0h2v2h-2z"/>
<path fill="#00906f" d="M561.1 569.1h2v2h-2zM516.5 513.9h2v2h-2zM499.9 526.9h2v2h-2zM536.3 486.9h2v2h-2zM489.8 455.2h2v2h-2zM489.8 446.9h2v2h-2zM577.1 477.7h2v2h-2zM566.0 469.9h2v2h-2zM578.3 549.1h2v2h-2zM529.2 437.1h2v2h-2zM524.2 547.0h2v2h-2zM501.7 594.6h2v2h-2zM535.2 587.8h2v2h-2zM594.6 488.7h2v2h-2zM504.8 588.6h2v2h-2zM472.1 528.5h2v2h-2zM588.8 450.1h2v2h-2zM516.7 490.1h2v2h-2zM565.5 606.3h2v2h-2zM536.8 510.4h2v2h-2zM526.2 532.2h2v2h-2zM539.0 502.2h2v2h-2zM510.6 435.2h2v2h-2zM500.8 440.9h2v2h-2zM552.0 481.1h2v2h-2zM538.5 391.0h2v2h-2zM510.1 456.8h2v2h-2zM483.2 422.1h2v2h-2zM636.5 489.2h2v2h-2zM441.7 515.6h2v2h-2zM462.8 517.5h2v2h-2zM474.6 396.7h2v2h-2zM531.1 455.0h2v2h-2zM581.3 477.7h2v2h-2zM590.6 499.0h2v2h-2zM548.2 405.7h2v2h-2zM457.8 515.7h2v2h-2zM568.0 501.1h2v2h-2zM474.7 401.3h2v2h-2zM533.1 604.6h2v2h-2zM555.7 473.6h2v2h-2zM510.5 544.1h2v2h-2zM517.7 442.6h2v2h-2zM563.8 469.9h2v2h-2zM505.0 542.0h2v2h-2zM500.2 439.9h2v2h-2zM509.2 493.7h2v2h-2zM498.4 487.7h2v2h-2zM510.0 513.8h2v2h-2zM528.0 595.1h2v2h-2zM530.7 521.7h2v2h-2zM492.3 480.2h2v2h-2zM551.7 424.1h2v2h-2zM507.0 577.6h2v2h-2zM505.6 489.8h2v2h-2zM503.2 474.8h2v2h-2zM533.4 457.3h2v2h-2zM434.4 435.2h2v2h-2zM515.6 540.8h2v2h-2zM470.4 450.3h2v2h-2zM494.9 487.6h2v2h-2zM521.4 397.0h2v2h-2zM544.0 524.4h2v2h-2zM471.6 501.9h2v2h-2zM519.7 545.5h2v2h-2zM534.9 446.9h2v2h-2zM483.5 472.2h2v2h-2zM563.0 583.1h2v2h-2zM562.2 489.2h2v2h-2zM477.2 456.8h2v2h-2zM508.0 415.5h2v2h-2zM534.5 511.6h2v2h-2zM513.3 503.6h2v2h-2zM583.3 619.6h2v2h-2zM860.5 537.1h2v2h-2zM710.6 461.0h2v2h-2zM657.1 474.3h2v2h-2zM610.0 474.2h2v2h-2zM640.4 439.6h2v2h-2zM659.8 489.2h2v2h-2zM654.3 459.8h2v2h-2zM630.0 487.2h2v2h-2zM623.7 494.3h2v2h-2zM710.9 446.4h2v2h-2zM640.6 484.8h2v2h-2zM875.6 530.0h2v2h-2z"/>
<path fill="#00a857" d="M510.5 532.2h2v2h-2zM421.4 398.6h2v2h-2zM608.0 523.8h2v2h-2zM510.7 461.5h2v2h-2zM477.4 482.8h2v2h-2zM468.4 447.0h2v2h-2zM535.3 530.2h2v2h-2zM532.9 465.3h2v2h-2zM455.8 545.8h2v2h-2zM591.4 552.1h2v2h-2zM430.7 463.2h2v2h-2zM475.6 510.0h2v2h-2zM485.8 522.3h2v2h-2zM465.1 640.2h2v2h-2zM533.4 494.3h2v2h-2zM442.1 402.3h2v2h-2zM519.0 488.2h2v2h-2zM554.1 451.5h2v2h-2zM487.3 458.8h2v2h-2zM489.2 417.2h2v2h-2zM467.2 395.5h2v2h-2zM598.3 488.8h2v2h-2zM580.2 503.8h2v2h-2zM534.3 406.9h2v2h-2zM484.0 449.3h2v2h-2zM507.8 483.5h2v2h-2zM582.2 512.4h2v2h-2zM487.4 403.8h2v2h-2zM551.6 412.9h2v2h-2zM516.8 452.6h2v2h-2zM532.4 553.5h2v2h-2zM436.1 472.6h2v2h-2zM497.9 468.7h2v2h-2zM507.9 510.1h2v2h-2zM480.4 422.7h2v2h-2zM497.8 475.3h2v2h-2zM541.5 444.6h2v2h-2zM533.8 409.8h2v2h-2zM519.4 498.9h2v2h-2zM508.9 453.1h2v2h-2zM519.8 556.7h2v2h-2zM537.0 439.0h2v2h-2zM530.9 480.9h2v2h-2zM585.4 547.3h2v2h-2zM493.3 446.8h2v2h-2zM468.6 598.8h2v2h-2zM533.1 429.7h2v2h-2zM550.3 442.9h2v2h-2zM431.6 512.5h2v2h-2zM510.7 411.6h2v2h-2zM545.7 482.1h2v2h-2zM529.1 534.3h2v2h-2zM561.2 456.4h2v2h-2zM479.6 461.8h2v2h-2zM488.4 463.6h2v2h-2zM493.5 471.1h2v2h-2zM561.2 483.2h2v2h-2zM492.7 514.6h2v2h-2zM497.9 402.6h2v2h-2zM442.1 444.1h2v2h-2zM516.5 435.1h2v2h-2zM598.8 504.0h2v2h-2zM560.2 523.5h2v2h-2zM529.8 451.0h2v2h-2zM489.9 454.4h2v2h-2zM479.4 595.8h2v2h-2zM531.1 412.1h2v2h-2zM464.2 518.5h2v2h-2zM470.6 386.6h2v2h-2zM510.5 431.0h2v2h-2zM533.3 476.4h2v2h-2zM451.7 611.9h2v2h-2zM552.3 454.9h2v2h-2zM555.0 430.9h2v2h-2zM504.5 560.4h2v2h-2zM547.3 549.2h2v2h-2zM497.6 442.3h2v2h-2zM560.8 489.2h2v2h-2zM472.0 423.3h2v2h-2zM484.3 474.3h2v2h-2zM567.8 510.6h2v2h-2zM497.9 590.4h2v2h-2zM446.7 463.1h2v2h-2zM624.7 485.8h2v2h-2zM494.0 463.1h2v2h-2zM495.4 438.3h2v2h-2zM512.0 428.3h2v2h-2zM484.3 491.1h2v2h-2zM483.1 494.5h2v2h-2zM464.6 516.8h2v2h-2zM451.7 488.0h2v2h-2zM511.6 491.0h2v2h-2zM561.6 406.2h2v2h-2zM534.6 556.1h2v2h-2zM514.9 433.1h2v2h-2zM542.2 513.1h2v2h-2zM553.4 479.6h2v2h-2zM553.3 475.1h2v2h-2zM455.9 473.7h2v2h-2zM530.0 398.2h2v2h-2zM539.1 534.5h2v2h-2zM551.8 393.4h2v2h-2zM551.0 409.4h2v2h-2zM532.5 468.2h2v2h-2zM450.8 536.7h2v2h-2zM536.4 412.3h2v2h-2zM504.6 418.6h2v2h-2zM475.2 510.2h2v2h-2zM538.0 541.3h2v2h-2zM516.9 431.0h2v2h-2zM526.4 435.5h2v2h-2zM489.1 412.5h2v2h-2zM522.8 463.4h2v2h-2zM431.7 542.9h2v2h-2zM470.5 488.0h2v2h-2zM585.4 634.6h2v2h-2zM505.9 522.4h2v2h-2zM500.4 467.4h2v2h-2zM489.1 554.1h2v2h-2zM496.9 490.9h2v2h-2zM520.4 502.0h2v2h-2zM493.8 475.8h2v2h-2zM530.1 605.9h2v2h-2zM515.8 494.7h2v2h-2zM523.5 536.5h2v2h-2zM531.9 437.9h2v2h-2zM558.3 514.6h2v2h-2zM534.8 512.9h2v2h-2zM464.3 423.3h2v2h-2zM534.2 491.6h2v2h-2zM492.3 506.2h2v2h-2zM455.1 453.1h2v2h-2zM467.5 418.6h2v2h-2zM435.6 558.6h2v2h-2zM556.8 462.4h2v2h-2zM534.2 443.0h2v2h-2zM598.2 470.3h2v2h-2zM498.8 457.9h2v2h-2zM572.3 614.5h2v2h-2zM593.2 488.9h2v2h-2zM497.6 421.4h2v2h-2zM455.7 479.7h2v2h-2zM512.9 443.2h2v2h-2zM476.2 638.9h2v2h-2zM484.3 412.9h2v2h-2zM607.4 440.5h2v2h-2zM604.5 520.9h2v2h-2zM731.4 521.0h2v2h-2zM791.4 516.7h2v2h-2zM618.5 506.3h2v2h-2zM745.1 533.5h2v2h-2zM679.4 498.9h2v2h-2zM697.1 456.4h2v2h-2zM601.5 496.7h2v2h-2zM617.9 549.6h2v2h-2zM632.4 480.5h2v2h-2zM932.3 467.8h2v2h-2zM956.8 497.2h2v2h-2zM824.2 507.7h2v2h-2zM841.8 518.5h2v2h-2zM861.0 511.9h2v2h-2zM869.8 508.8h2v2h-2zM899.9 505.9h2v2h-2zM862.0 529.1h2v2h-2zM893.0 537.0h2v2h-2zM792.3 545.6h2v2h-2zM756.0 532.1h2v2h-2z"/>
<path fill="#00c03f" d="M503.5 502.4h2v2h-2zM560.7 422.4h2v2h-2zM544.6 473.0h2v2h-2zM501.7 418.3h2v2h-2zM519.5 453.5h2v2h-2zM577.2 437.0h2v2h-2zM529.3 393.4h2v2h-2zM525.9 592.3h2v2h-2zM535.1 482.8h2v2h-2zM599.6 520.7h2v2h-2zM566.3 447.1h2v2h-2zM466.4 413.2h2v2h-2zM502.4 461.7h2v2h-2zM614.9 539.6h2v2h-2zM485.9 570.3h2v2h-2zM475.6 514.9h2v2h-2zM508.9 625.9h2v2h-2zM481.1 460.7h2v2h-2zM514.1 472.3h2v2h-2zM505.0 462.2h2v2h-2zM549.2 591.6h2v2h-2zM586.7 509.7h2v2h-2zM499.2 457.7h2v2h-2zM480.6 485.3h2v2h-2zM517.4 523.1h2v2h-2zM511.9 469.7h2v2h-2zM574.9 433.4h2v2h-2zM577.7 563.9h2v2h-2zM507.9 507.5h2v2h-2zM507.1 569.0h2v2h-2zM499.5 449.0h2v2h-2zM556.8 489.0h2v2h-2zM504.1 420.8h2v2h-2zM466.7 436.4h2v2h-2zM479.8 518.2h2v2h-2zM531.9 507.2h2v2h-2zM543.2 426.5h2v2h-2zM404.1 530.3h2v2h-2zM476.7 472.8h2v2h-2zM463.5 485.2h2v2h-2zM551.2 454.0h2v2h-2zM552.3 428.9h2v2h-2zM534.7 430.8h2v2h-2zM499.0 553.4h2v2h-2zM563.3 560.7h2v2h-2zM476.1 394.5h2v2h-2zM487.3 509.7h2v2h-2zM524.7 428.9h2v2h-2zM503.3 466.8h2v2h-2zM514.7 568.3h2v2h-2zM457.2 431.6h2v2h-2zM470.2 563.5h2v2h-2zM582.1 551.4h2v2h-2zM494.2 497.3h2v2h-2zM491.3 422.2h2v2h-2zM552.1 551.6h2v2h-2zM509.8 423.5h2v2h-2zM565.1 438.8h2v2h-2zM540.3 422.4h2v2h-2zM522.4 551.1h2v2h-2zM506.8 445.5h2v2h-2zM572.9 539.4h2v2h-2zM465.5 478.0h2v2h-2zM529.9 469.6h2v2h-2zM482.7 412.8h2v2h-2zM518.6 430.0h2v2h-2zM566.7 432.2h2v2h-2zM512.9 428.9h2v2h-2zM534.1 442.3h2v2h-2zM546.7 499.7h2v2h-2zM422.4 536.8h2v2h-2zM453.0 510.0h2v2h-2zM510.6 498.1h2v2h-2zM519.9 466.9h2v2h-2zM508.7 446.6h2v2h-2zM525.5 513.6h2v2h-2zM521.0 478.1h2v2h-2zM552.7 499.9h2v2h-2zM543.4 520.9h2v2h-2zM547.1 420.6h2v2h-2zM553.2 512.0h2v2h-2zM481.1 445.8h2v2h-2zM545.4 502.9h2v2h-2zM555.3 500.4h2v2h-2zM465.1 497.6h2v2h-2zM492.9 454.0h2v2h-2zM554.0 499.6h2v2h-2zM510.0 482.4h2v2h-2zM610.1 556.9h2v2h-2zM632.4 584.3h2v2h-2zM496.7 413.7h2v2h-2zM586.4 443.1h2v2h-2zM521.0 538.4h2v2h-2zM484.2 387.0h2v2h-2zM550.7 450.9h2v2h-2zM559.5 492.1h2v2h-2zM507.8 479.6h2v2h-2zM506.4 464.0h2v2h-2zM405.1 465.7h2v2h-2zM483.6 474.1h2v2h-2zM474.7 432.2h2v2h-2zM484.7 492.8h2v2h-2zM495.2 429.7h2v2h-2zM501.8 465.1h2v2h-2zM600.5 514.0h2v2h-2zM725.6 463.0h2v2h-2zM784.2 494.4h2v2h-2zM628.1 465.8h2v2h-2zM608.9 466.2h2v2h-2zM866.2 478.8h2v2h-2zM605.7 504.9h2v2h-2zM616.2 466.5h2v2h-2zM858.0 538.0h2v2h-2z"/>
<path fill="#00d827" d="M615.3 556.4h2v2h-2zM523.4 449.1h2v2h-2zM521.5 349.6h2v2h-2zM526.2 447.4h2v2h-2zM520.4 489.8h2v2h-2zM558.6 525.0h2v2h-2zM542.7 444.2h2v2h-2zM549.9 395.1h2v2h-2zM536.0 441.0h2v2h-2zM466.6 401.1h2v2h-2zM572.6 542.8h2v2h-2zM580.5 500.4h2v2h-2zM521.1 536.7h2v2h-2zM460.1 450.5h2v2h-2zM476.8 425.5h2v2h-2zM549.7 560.4h2v2h-2zM495.4 460.8h2v2h-2zM476.8 422.1h2v2h-2zM492.2 463.5h2v2h-2zM612.0 520.0h2v2h-2zM550.4 461.4h2v2h-2zM559.0 456.1h2v2h-2zM523.6 440.7h2v2h-2zM497.2 448.7h2v2h-2zM488.7 395.7h2v2h-2zM472.7 414.3h2v2h-2zM500.1 474.3h2v2h-2zM563.0 495.5h2v2h-2zM556.9 448.4h2v2h-2zM498.4 544.4h2v2h-2zM564.9 460.1h2v2h-2zM527.3 482.9h2v2h-2zM473.7 332.2h2v2h-2zM504.8 457.8h2v2h-2zM502.3 414.9h2v2h-2zM477.2 440.6h2v2h-2zM450.8 606.8h2v2h-2zM532.1 470.7h2v2h-2zM517.5 426.5h2v2h-2zM517.1 484.8h2v2h-2zM518.5 556.7h2v2h-2zM581.2 472.8h2v2h-2zM513.7 505.4h2v2h-2zM478.1 436.7h2v2h-2zM553.2 441.1h2v2h-2zM486.2 446.4h2v2h-2zM513.3 437.5h2v2h-2zM404.6 414.4h2v2h-2zM741.8 541.5h2v2h-2zM680.6 470.3h2v2h-2zM682.1 462.2h2v2h-2zM739.9 474.4h2v2h-2zM774.5 432.7h2v2h-2zM741.9 468.4h2v2h-2z"/>
<path fill="#00f00f" d="M465.0 275.4h2v2h-2zM523.1 435.1h2v2h-2zM457.6 276.8h2v2h-2zM514.4 263.4h2v2h-2zM469.1 261.7h2v2h-2zM525.2 252.5h2v2h-2zM471.2 512.0h2v2h-2zM585.9 576.5h2v2h-2zM467.3 561.0h2v2h-2zM437.3 470.1h2v2h-2zM508.1 333.8h2v2h-2zM465.4 342.2h2v2h-2zM494.3 520.6h2v2h-2zM524.4 387.1h2v2h-2zM504.1 260.6h2v2h-2zM549.2 451.5h2v2h-2zM416.2 484.2h2v2h-2zM518.7 474.7h2v2h-2zM553.5 397.5h2v2h-2zM484.0 234.9h2v2h-2zM490.0 358.8h2v2h-2zM524.9 410.3h2v2h-2zM545.5 520.7h2v2h-2zM490.1 445.8h2v2h-2zM594.2 474.2h2v2h-2zM535.5 403.4h2v2h-2zM544.7 394.9h2v2h-2zM531.7 311.3h2v2h-2zM463.7 450.1h2v2h-2zM507.5 411.0h2v2h-2zM518.9 373.3h2v2h-2zM543.7 355.2h2v2h-2zM483.6 499.4h2v2h-2zM555.8 521.6h2v2h-2zM529.3 443.2h2v2h-2zM491.9 230.5h2v2h-2zM516.6 434.1h2v2h-2zM504.7 268.0h2v2h-2zM456.5 408.3h2v2h-2zM526.3 428.5h2v2h-2zM490.2 462.5h2v2h-2zM516.4 315.8h2v2h-2zM480.4 175.5h2v2h-2zM496.4 515.0h2v2h-2zM451.7 464.9h2v2h-2zM524.1 423.9h2v2h-2zM524.9 406.1h2v2h-2zM483.2 262.6h2v2h-2zM496.2 390.7h2v2h-2zM526.7 404.9h2v2h-2zM426.0 440.9h2v2h-2zM485.8 424.2h2v2h-2zM590.5 356.2h2v2h-2zM415.0 445.1h2v2h-2zM454.6 275.3h2v2h-2zM507.1 213.7h2v2h-2zM653.7 446.3h2v2h-2zM429.6 440.3h2v2h-2zM731.1 509.4h2v2h-2zM663.0 483.1h2v2h-2zM781.3 473.3h2v2h-2zM637.1 510.9h2v2h-2zM633.7 513.3h2v2h-2zM610.7 493.6h2v2h-2zM660.0 418.5h2v2h-2z"/>
<path fill="#07f800" d="M471.7 503.8h2v2h-2zM477.0 502.0h2v2h-2zM527.5 438.9h2v2h-2zM601.0 572.3h2v2h-2zM498.9 463.7h2v2h-2zM484.5 408.7h2v2h-2zM518.1 415.9h2v2h-2zM538.9 353.9h2v2h-2zM496.0 463.6h2v2h-2zM552.7 508.8h2v2h-2zM550.1 441.7h2v2h-2zM473.6 339.4h2v2h-2zM537.7 514.9h2v2h-2zM563.7 417.7h2v2h-2zM481.8 283.9h2v2h-2zM428.0 400.0h2v2h-2zM505.1 478.3h2v2h-2zM540.4 436.6h2v2h-2zM527.9 429.2h2v2h-2zM481.4 446.0h2v2h-2zM563.1 554.7h2v2h-2zM507.2 325.6h2v2h-2zM533.7 406.9h2v2h-2zM531.1 436.4h2v2h-2zM513.0 518.1h2v2h-2zM502.4 224.2h2v2h-2zM517.8 467.7h2v2h-2zM484.7 487.8h2v2h-2zM475.7 534.8h2v2h-2zM520.7 472.0h2v2h-2zM568.4 433.8h2v2h-2zM477.4 200.0h2v2h-2zM484.7 476.6h2v2h-2zM531.1 578.9h2v2h-2zM519.8 349.9h2v2h-2zM519.6 424.7h2v2h-2zM513.1 500.7h2v2h-2zM451.2 375.9h2v2h-2zM515.2 443.1h2v2h-2zM599.6 531.5h2v2h-2zM496.1 266.7h2v2h-2zM541.3 396.6h2v2h-2zM513.0 441.6h2v2h-2zM538.7 450.2h2v2h-2zM541.8 414.1h2v2h-2zM428.7 481.5h2v2h-2zM533.9 372.6h2v2h-2zM507.8 438.7h2v2h-2zM539.2 518.0h2v2h-2zM564.4 431.3h2v2h-2zM524.4 343.7h2v2h-2zM503.4 345.5h2v2h-2zM490.2 473.3h2v2h-2zM530.2 447.2h2v2h-2zM574.5 473.2h2v2h-2zM549.3 458.3h2v2h-2zM491.8 425.2h2v2h-2zM512.9 494.7h2v2h-2zM517.5 382.4h2v2h-2zM501.6 247.9h2v2h-2zM540.1 471.3h2v2h-2zM573.7 443.5h2v2h-2zM475.8 476.4h2v2h-2zM447.9 549.8h2v2h-2zM543.0 459.6h2v2h-2zM565.7 537.6h2v2h-2zM537.1 481.7h2v2h-2zM527.6 339.9h2v2h-2zM489.7 252.7h2v2h-2zM546.6 417.3h2v2h-2zM500.0 464.0h2v2h-2zM496.9 260.3h2v2h-2zM475.3 471.1h2v2h-2zM400.2 442.3h2v2h-2zM520.8 206.4h2v2h-2zM552.8 462.5h2v2h-2zM509.0 437.6h2v2h-2zM485.6 296.1h2v2h-2zM500.7 470.5h2v2h-2zM575.5 498.5h2v2h-2zM580.6 479.9h2v2h-2zM490.3 378.3h2v2h-2zM584.6 616.0h2v2h-2zM510.2 454.1h2v2h-2zM484.5 453.6h2v2h-2zM438.2 375.4h2v2h-2zM532.3 453.1h2v2h-2zM493.8 360.0h2v2h-2zM541.0 464.4h2v2h-2zM522.6 335.2h2v2h-2zM474.3 377.9h2v2h-2zM597.7 515.5h2v2h-2zM558.8 512.6h2v2h-2zM500.8 361.5h2v2h-2zM538.3 452.1h2v2h-2zM471.7 451.2h2v2h-2zM478.6 453.2h2v2h-2zM507.3 434.5h2v2h-2zM534.2 419.4h2v2h-2zM458.1 430.4h2v2h-2zM513.5 418.4h2v2h-2zM499.6 430.7h2v2h-2zM479.0 454.3h2v2h-2zM476.5 445.6h2v2h-2zM519.6 499.0h2v2h-2zM499.7 329.3h2v2h-2zM507.6 531.6h2v2h-2zM573.8 489.3h2v2h-2zM543.3 258.6h2v2h-2zM460.5 397.4h2v2h-2zM515.2 380.5h2v2h-2zM526.1 372.0h2v2h-2zM455.5 441.2h2v2h-2zM495.0 496.4h2v2h-2zM464.3 550.4h2v2h-2zM553.2 521.3h2v2h-2zM606.8 392.4h2v2h-2zM413.5 456.0h2v2h-2zM547.8 494.9h2v2h-2zM570.4 371.5h2v2h-2zM528.0 436.9h2v2h-2zM545.6 382.4h2v2h-2zM456.8 101.1h2v2h-2zM544.6 429.1h2v2h-2zM469.4 409.3h2v2h-2zM623.4 505.5h2v2h-2zM715.1 513.2h2v2h-2zM651.8 421.5h2v2h-2zM521.5 125.0h2v2h-2zM411.0 175.0h2v2h-2zM576.7 224.6h2v2h-2zM414.0 259.8h2v2h-2zM835.9 236.2h2v2h-2zM856.2 242.0h2v2h-2zM705.8 261.7h2v2h-2zM781.4 283.8h2v2h-2zM682.6 296.5h2v2h-2zM715.6 312.9h2v2h-2zM841.6 465.8h2v2h-2zM813.7 547.6h2v2h-2zM643.8 604.4h2v2h-2zM639.9 646.2h2v2h-2zM682.0 296.5h2v2h-2zM611.0 348.0h2v2h-2zM609.0 368.0h2v2h-2zM652.0 375.0h2v2h-2zM648.0 410.0h2v2h-2z"/>
<path fill="#1ae500" d="M522.4 444.2h2v2h-2zM472.9 422.8h2v2h-2zM430.5 619.8h2v2h-2zM522.4 408.2h2v2h-2zM556.0 357.5h2v2h-2zM502.2 431.7h2v2h-2zM527.5 431.0h2v2h-2zM511.2 401.4h2v2h-2zM585.2 560.5h2v2h-2zM515.4 409.9h2v2h-2zM569.4 473.5h2v2h-2zM528.5 368.6h2v2h-2zM523.9 386.8h2v2h-2zM538.5 403.1h2v2h-2zM481.3 367.6h2v2h-2zM512.8 405.2h2v2h-2zM548.7 412.7h2v2h-2zM479.0 404.3h2v2h-2zM495.4 430.0h2v2h-2zM510.7 440.2h2v2h-2zM471.1 455.9h2v2h-2zM489.3 479.3h2v2h-2zM498.1 454.2h2v2h-2zM520.2 381.7h2v2h-2zM513.9 393.6h2v2h-2zM491.7 446.6h2v2h-2zM519.0 415.4h2v2h-2zM553.5 405.2h2v2h-2zM517.1 374.9h2v2h-2zM477.2 460.4h2v2h-2zM450.1 496.2h2v2h-2zM512.0 528.7h2v2h-2zM485.0 444.6h2v2h-2zM510.4 424.6h2v2h-2zM524.1 513.8h2v2h-2zM499.5 470.2h2v2h-2zM581.1 448.2h2v2h-2zM520.0 353.8h2v2h-2zM475.2 454.8h2v2h-2zM522.4 422.2h2v2h-2zM485.4 376.2h2v2h-2zM467.2 494.1h2v2h-2zM557.6 449.9h2v2h-2zM493.0 518.4h2v2h-2zM525.4 442.3h2v2h-2zM485.4 406.7h2v2h-2zM484.3 509.5h2v2h-2zM524.9 499.4h2v2h-2zM491.3 462.8h2v2h-2zM493.2 427.6h2v2h-2zM567.1 510.8h2v2h-2zM479.2 400.8h2v2h-2zM546.0 411.8h2v2h-2zM535.7 398.0h2v2h-2zM508.0 481.2h2v2h-2zM525.0 501.9h2v2h-2zM542.3 418.6h2v2h-2zM523.4 454.2h2v2h-2zM508.7 434.9h2v2h-2zM512.2 446.6h2v2h-2zM507.6 436.4h2v2h-2zM488.7 398.9h2v2h-2zM551.3 414.3h2v2h-2zM479.1 355.3h2v2h-2zM553.2 514.1h2v2h-2zM457.9 414.0h2v2h-2zM596.7 481.3h2v2h-2zM507.8 419.9h2v2h-2zM459.4 362.0h2v2h-2zM550.8 368.9h2v2h-2zM468.0 452.8h2v2h-2zM529.2 412.5h2v2h-2zM494.9 382.4h2v2h-2zM519.8 446.1h2v2h-2zM560.5 481.0h2v2h-2zM554.5 477.6h2v2h-2zM573.6 506.5h2v2h-2zM477.8 425.7h2v2h-2zM503.8 432.0h2v2h-2zM521.4 474.4h2v2h-2zM476.3 444.0h2v2h-2zM531.9 438.3h2v2h-2zM465.4 432.4h2v2h-2zM515.5 466.5h2v2h-2zM497.0 262.6h2v2h-2zM543.4 463.8h2v2h-2zM440.9 480.3h2v2h-2zM550.3 451.4h2v2h-2zM518.7 548.1h2v2h-2zM503.5 415.8h2v2h-2zM474.0 401.5h2v2h-2zM514.2 437.3h2v2h-2zM510.4 417.9h2v2h-2zM496.4 398.6h2v2h-2zM527.0 357.8h2v2h-2zM469.4 436.8h2v2h-2zM602.8 430.3h2v2h-2zM519.6 400.3h2v2h-2zM440.0 463.1h2v2h-2zM486.7 454.8h2v2h-2zM487.4 467.3h2v2h-2zM538.1 427.2h2v2h-2zM570.0 487.9h2v2h-2zM519.7 438.8h2v2h-2zM529.0 440.9h2v2h-2zM514.3 446.5h2v2h-2zM594.6 556.6h2v2h-2zM530.5 453.7h2v2h-2zM503.7 229.6h2v2h-2zM462.0 388.4h2v2h-2zM562.2 461.5h2v2h-2zM487.2 363.3h2v2h-2zM446.6 475.4h2v2h-2zM509.4 468.5h2v2h-2zM513.6 455.8h2v2h-2zM535.9 416.9h2v2h-2zM521.7 397.3h2v2h-2zM440.0 460.2h2v2h-2zM520.1 427.4h2v2h-2zM432.5 492.6h2v2h-2zM496.0 479.1h2v2h-2zM517.3 458.0h2v2h-2zM490.9 420.1h2v2h-2zM616.4 495.3h2v2h-2zM497.8 399.8h2v2h-2zM478.9 416.6h2v2h-2zM476.3 377.6h2v2h-2zM478.3 416.8h2v2h-2zM499.6 431.6h2v2h-2zM526.6 453.8h2v2h-2zM501.3 412.2h2v2h-2zM544.2 483.1h2v2h-2zM528.9 427.2h2v2h-2zM538.5 501.8h2v2h-2zM520.3 471.0h2v2h-2zM465.8 399.1h2v2h-2zM414.2 310.6h2v2h-2zM505.0 368.7h2v2h-2zM462.8 280.2h2v2h-2zM514.5 415.5h2v2h-2zM540.3 408.3h2v2h-2zM469.9 285.8h2v2h-2zM471.7 390.8h2v2h-2zM561.1 372.3h2v2h-2zM538.9 376.4h2v2h-2zM626.0 434.7h2v2h-2zM618.3 471.9h2v2h-2z"/>
<path fill="#2dd200" d="M475.0 371.1h2v2h-2zM558.6 365.1h2v2h-2zM515.3 431.5h2v2h-2zM497.9 373.3h2v2h-2zM550.8 408.6h2v2h-2zM500.3 408.0h2v2h-2zM482.2 349.1h2v2h-2zM484.1 405.7h2v2h-2zM535.8 408.9h2v2h-2zM496.3 401.9h2v2h-2zM602.9 445.6h2v2h-2zM535.7 372.3h2v2h-2zM489.4 390.9h2v2h-2zM441.8 421.6h2v2h-2zM514.6 411.7h2v2h-2zM514.8 368.5h2v2h-2zM415.5 408.3h2v2h-2zM601.4 439.2h2v2h-2zM476.5 250.4h2v2h-2zM500.8 413.0h2v2h-2zM538.4 327.6h2v2h-2zM528.1 440.8h2v2h-2zM503.0 412.6h2v2h-2zM531.4 366.4h2v2h-2zM483.0 414.9h2v2h-2zM483.6 418.8h2v2h-2zM539.5 398.9h2v2h-2zM536.9 383.4h2v2h-2zM535.1 430.1h2v2h-2zM541.2 370.0h2v2h-2zM510.6 376.9h2v2h-2zM455.2 353.7h2v2h-2zM542.7 348.2h2v2h-2zM470.9 369.0h2v2h-2zM507.8 411.5h2v2h-2zM540.5 347.3h2v2h-2zM489.5 418.2h2v2h-2zM537.5 416.9h2v2h-2zM504.2 358.4h2v2h-2zM470.6 360.7h2v2h-2zM463.8 444.0h2v2h-2zM467.8 271.5h2v2h-2zM498.1 376.5h2v2h-2zM487.0 423.2h2v2h-2zM502.4 377.0h2v2h-2zM531.8 424.7h2v2h-2zM490.0 230.7h2v2h-2zM540.6 385.3h2v2h-2zM534.7 367.4h2v2h-2zM506.8 392.7h2v2h-2zM441.2 367.8h2v2h-2zM442.8 492.5h2v2h-2zM625.8 644.7h2v2h-2zM519.8 398.4h2v2h-2zM492.2 219.2h2v2h-2zM525.6 313.5h2v2h-2zM604.9 502.3h2v2h-2zM511.8 554.0h2v2h-2zM464.0 411.8h2v2h-2zM459.1 386.9h2v2h-2zM488.9 373.5h2v2h-2zM474.0 377.0h2v2h-2zM493.8 422.6h2v2h-2zM523.0 275.5h2v2h-2zM443.1 440.0h2v2h-2zM546.4 408.4h2v2h-2zM482.4 418.6h2v2h-2zM447.6 430.1h2v2h-2zM497.7 411.7h2v2h-2zM510.5 360.5h2v2h-2zM489.7 377.2h2v2h-2zM563.5 411.3h2v2h-2zM511.0 375.9h2v2h-2zM520.9 375.7h2v2h-2zM540.2 434.6h2v2h-2zM577.6 389.7h2v2h-2zM492.5 357.2h2v2h-2zM490.7 477.7h2v2h-2zM445.0 454.5h2v2h-2zM427.1 487.2h2v2h-2zM462.7 324.3h2v2h-2zM504.3 239.8h2v2h-2zM521.7 420.3h2v2h-2zM510.6 223.9h2v2h-2zM490.8 403.5h2v2h-2zM493.4 393.5h2v2h-2zM473.0 355.9h2v2h-2zM486.1 291.0h2v2h-2zM515.4 364.9h2v2h-2zM450.0 404.6h2v2h-2zM464.5 397.6h2v2h-2zM528.8 407.0h2v2h-2zM469.3 262.8h2v2h-2zM538.4 442.1h2v2h-2zM529.9 398.7h2v2h-2zM515.5 401.5h2v2h-2zM507.4 423.5h2v2h-2zM499.1 413.6h2v2h-2zM543.7 436.4h2v2h-2zM472.7 422.6h2v2h-2zM520.6 418.9h2v2h-2zM522.2 416.6h2v2h-2zM497.8 363.3h2v2h-2zM428.3 405.0h2v2h-2zM491.8 379.4h2v2h-2zM531.4 240.7h2v2h-2zM494.4 497.8h2v2h-2zM467.4 368.1h2v2h-2zM468.7 413.8h2v2h-2zM535.0 402.2h2v2h-2zM524.8 419.2h2v2h-2zM472.2 437.9h2v2h-2zM493.2 415.8h2v2h-2zM469.4 375.5h2v2h-2zM528.2 341.0h2v2h-2zM585.9 491.0h2v2h-2zM540.7 368.0h2v2h-2zM469.5 309.2h2v2h-2zM495.6 346.0h2v2h-2zM502.3 394.0h2v2h-2zM523.8 413.0h2v2h-2zM509.5 342.4h2v2h-2zM507.2 365.3h2v2h-2zM511.1 364.4h2v2h-2zM525.8 390.1h2v2h-2zM537.3 389.9h2v2h-2zM556.3 410.2h2v2h-2zM462.6 413.1h2v2h-2zM481.1 343.0h2v2h-2zM471.0 383.7h2v2h-2zM479.4 427.8h2v2h-2zM516.5 380.0h2v2h-2zM523.4 484.3h2v2h-2zM469.1 375.7h2v2h-2zM601.5 414.0h2v2h-2zM552.7 401.4h2v2h-2zM475.5 358.2h2v2h-2zM531.8 472.0h2v2h-2zM482.6 457.8h2v2h-2zM532.6 357.8h2v2h-2zM465.6 390.8h2v2h-2zM451.5 411.6h2v2h-2zM567.2 392.8h2v2h-2zM462.4 410.1h2v2h-2zM536.1 370.7h2v2h-2zM462.7 388.5h2v2h-2zM482.8 385.4h2v2h-2zM490.9 417.7h2v2h-2zM494.5 352.4h2v2h-2zM543.6 333.4h2v2h-2zM504.4 461.0h2v2h-2zM533.2 420.7h2v2h-2zM500.5 387.8h2v2h-2zM477.6 416.2h2v2h-2zM418.7 427.0h2v2h-2zM568.0 423.2h2v2h-2zM502.8 402.4h2v2h-2zM566.0 418.3h2v2h-2zM619.3 417.9h2v2h-2zM440.5 239.4h2v2h-2zM498.1 360.0h2v2h-2zM433.2 409.3h2v2h-2zM601.8 379.0h2v2h-2zM398.1 439.1h2v2h-2zM409.7 427.7h2v2h-2zM410.0 354.4h2v2h-2zM436.5 417.3h2v2h-2zM519.5 232.5h2v2h-2zM621.2 370.1h2v2h-2zM396.9 320.9h2v2h-2zM477.1 406.8h2v2h-2zM454.6 155.8h2v2h-2zM513.0 147.8h2v2h-2zM682.6 252.8h2v2h-2zM569.0 256.6h2v2h-2zM709.6 369.2h2v2h-2zM658.0 345.0h2v2h-2zM639.0 354.0h2v2h-2zM635.0 367.0h2v2h-2zM616.0 380.0h2v2h-2zM621.0 386.0h2v2h-2zM668.0 426.0h2v2h-2zM678.5 422.0h2v2h-2zM697.0 425.0h2v2h-2z"/>
<path fill="#40bf00" d="M552.4 393.8h2v2h-2zM500.7 339.8h2v2h-2zM516.6 419.5h2v2h-2zM487.1 407.3h2v2h-2zM485.4 283.5h2v2h-2zM502.1 313.4h2v2h-2zM483.7 293.4h2v2h-2zM551.2 418.3h2v2h-2zM522.8 382.4h2v2h-2zM527.5 288.3h2v2h-2zM476.6 283.5h2v2h-2zM555.4 310.5h2v2h-2zM495.7 309.4h2v2h-2zM512.4 404.4h2v2h-2zM470.6 276.5h2v2h-2zM546.7 378.1h2v2h-2zM543.9 358.6h2v2h-2zM530.3 322.7h2v2h-2zM488.0 300.7h2v2h-2zM492.6 262.8h2v2h-2zM487.6 263.0h2v2h-2zM542.1 406.7h2v2h-2zM479.2 167.6h2v2h-2zM481.1 339.6h2v2h-2zM453.7 346.2h2v2h-2zM481.7 356.3h2v2h-2zM575.8 380.7h2v2h-2zM519.2 404.3h2v2h-2zM520.3 373.8h2v2h-2zM521.1 377.1h2v2h-2zM496.4 385.9h2v2h-2zM498.4 379.1h2v2h-2zM485.5 214.1h2v2h-2zM462.3 239.9h2v2h-2zM505.9 319.0h2v2h-2zM463.5 363.7h2v2h-2zM488.6 381.1h2v2h-2zM500.0 374.3h2v2h-2zM465.9 306.9h2v2h-2zM501.0 376.5h2v2h-2zM493.6 378.7h2v2h-2zM466.5 307.3h2v2h-2zM483.0 380.5h2v2h-2zM504.8 326.9h2v2h-2zM507.1 379.9h2v2h-2zM473.2 406.0h2v2h-2zM512.9 428.0h2v2h-2zM555.3 430.4h2v2h-2zM523.6 381.9h2v2h-2zM555.6 387.6h2v2h-2zM580.5 387.8h2v2h-2zM577.0 422.0h2v2h-2zM449.1 334.3h2v2h-2zM455.5 297.7h2v2h-2zM508.2 329.1h2v2h-2zM460.0 296.5h2v2h-2zM484.7 357.7h2v2h-2zM516.5 384.3h2v2h-2zM519.0 384.5h2v2h-2zM485.8 317.4h2v2h-2zM480.4 219.0h2v2h-2zM496.1 341.1h2v2h-2zM480.6 275.1h2v2h-2zM502.1 369.1h2v2h-2zM484.8 304.2h2v2h-2zM504.0 258.7h2v2h-2zM497.5 244.7h2v2h-2zM488.7 303.2h2v2h-2zM498.0 319.1h2v2h-2zM536.6 369.3h2v2h-2zM499.5 378.4h2v2h-2zM499.3 232.7h2v2h-2zM506.6 351.3h2v2h-2zM503.3 374.4h2v2h-2zM549.0 326.8h2v2h-2zM459.7 364.5h2v2h-2zM517.3 403.5h2v2h-2zM501.9 392.0h2v2h-2zM440.8 301.0h2v2h-2zM435.9 294.2h2v2h-2zM495.3 280.1h2v2h-2zM482.7 324.2h2v2h-2zM507.1 393.5h2v2h-2zM540.0 376.2h2v2h-2zM482.1 342.6h2v2h-2zM441.5 368.0h2v2h-2zM516.0 345.2h2v2h-2zM522.9 375.5h2v2h-2zM519.7 411.2h2v2h-2zM484.2 323.0h2v2h-2zM530.3 374.9h2v2h-2zM501.1 377.4h2v2h-2zM470.2 273.9h2v2h-2zM532.8 394.6h2v2h-2zM506.8 353.2h2v2h-2zM454.1 394.4h2v2h-2zM498.6 387.8h2v2h-2zM487.4 420.6h2v2h-2zM539.6 403.1h2v2h-2zM525.8 274.0h2v2h-2zM550.6 381.8h2v2h-2zM469.4 381.9h2v2h-2zM547.2 397.3h2v2h-2zM469.3 363.0h2v2h-2zM486.2 270.2h2v2h-2zM495.2 378.0h2v2h-2zM512.8 234.2h2v2h-2zM523.1 264.6h2v2h-2zM530.9 403.1h2v2h-2zM512.9 244.0h2v2h-2zM489.7 264.8h2v2h-2zM484.1 373.4h2v2h-2zM494.0 367.8h2v2h-2zM486.2 329.5h2v2h-2zM543.2 337.8h2v2h-2zM501.6 317.2h2v2h-2zM490.0 387.2h2v2h-2zM515.6 184.2h2v2h-2zM492.7 380.9h2v2h-2zM506.5 309.0h2v2h-2zM489.7 392.4h2v2h-2zM493.6 341.6h2v2h-2zM556.9 424.6h2v2h-2zM500.8 363.3h2v2h-2zM509.0 226.5h2v2h-2zM465.4 343.1h2v2h-2zM517.5 284.0h2v2h-2zM410.6 418.3h2v2h-2zM509.9 231.2h2v2h-2zM512.6 424.8h2v2h-2zM478.0 382.0h2v2h-2zM512.7 335.5h2v2h-2zM522.5 219.9h2v2h-2zM504.2 406.3h2v2h-2zM510.5 183.6h2v2h-2zM460.7 387.0h2v2h-2zM485.6 289.3h2v2h-2zM476.1 308.8h2v2h-2zM503.7 251.9h2v2h-2zM467.3 371.6h2v2h-2zM544.8 411.1h2v2h-2zM535.8 321.2h2v2h-2zM562.7 367.5h2v2h-2zM541.2 301.1h2v2h-2zM497.0 272.0h2v2h-2zM495.2 326.1h2v2h-2zM519.5 300.3h2v2h-2zM464.2 411.4h2v2h-2zM542.9 409.6h2v2h-2zM465.0 356.1h2v2h-2zM506.1 407.7h2v2h-2zM484.0 387.0h2v2h-2zM474.6 365.2h2v2h-2zM481.2 351.4h2v2h-2zM560.7 411.2h2v2h-2zM511.7 402.3h2v2h-2zM516.9 263.1h2v2h-2zM500.6 291.6h2v2h-2zM498.1 363.7h2v2h-2zM511.2 344.1h2v2h-2zM475.6 351.6h2v2h-2zM481.3 406.2h2v2h-2zM521.2 299.1h2v2h-2zM497.4 321.0h2v2h-2zM520.6 345.6h2v2h-2zM482.3 303.3h2v2h-2zM483.3 219.5h2v2h-2zM507.5 319.1h2v2h-2zM526.2 408.9h2v2h-2zM478.5 320.7h2v2h-2zM458.3 343.2h2v2h-2zM485.2 355.5h2v2h-2zM468.0 396.6h2v2h-2zM565.3 374.6h2v2h-2zM525.8 404.5h2v2h-2zM468.3 375.5h2v2h-2zM521.0 366.6h2v2h-2zM484.3 311.9h2v2h-2zM521.6 274.9h2v2h-2zM495.8 368.3h2v2h-2zM563.7 368.8h2v2h-2zM489.5 367.5h2v2h-2zM440.5 334.0h2v2h-2zM445.0 353.5h2v2h-2zM511.6 245.2h2v2h-2zM497.7 382.9h2v2h-2zM468.3 310.8h2v2h-2zM466.0 257.5h2v2h-2zM445.4 291.1h2v2h-2zM457.4 410.2h2v2h-2zM520.1 377.8h2v2h-2zM534.5 393.0h2v2h-2zM513.8 188.3h2v2h-2zM519.2 347.3h2v2h-2zM467.4 377.7h2v2h-2zM523.4 365.8h2v2h-2zM538.5 308.7h2v2h-2zM558.7 382.9h2v2h-2zM501.5 311.6h2v2h-2zM485.1 286.0h2v2h-2zM493.3 301.0h2v2h-2zM534.1 355.0h2v2h-2zM538.1 332.9h2v2h-2zM469.4 172.3h2v2h-2zM488.2 275.6h2v2h-2zM455.4 288.8h2v2h-2zM485.5 355.8h2v2h-2zM485.0 226.5h2v2h-2zM512.7 377.6h2v2h-2zM478.2 359.6h2v2h-2zM526.6 386.9h2v2h-2zM525.4 411.0h2v2h-2zM466.3 319.9h2v2h-2zM499.0 289.8h2v2h-2zM454.7 299.4h2v2h-2zM466.2 380.2h2v2h-2zM487.6 346.8h2v2h-2zM511.8 379.4h2v2h-2zM440.7 406.4h2v2h-2zM514.3 320.2h2v2h-2zM448.7 370.4h2v2h-2zM516.3 440.2h2v2h-2zM476.1 368.9h2v2h-2zM479.3 293.0h2v2h-2zM463.6 286.4h2v2h-2zM567.4 351.0h2v2h-2zM652.2 373.0h2v2h-2zM424.5 248.5h2v2h-2zM427.6 317.5h2v2h-2zM409.5 327.1h2v2h-2zM439.6 331.5h2v2h-2zM540.1 364.2h2v2h-2z"/>
<path fill="#53ac00" d="M493.0 320.4h2v2h-2zM532.7 350.7h2v2h-2zM498.3 357.1h2v2h-2zM500.6 269.8h2v2h-2zM464.0 285.1h2v2h-2zM502.3 321.4h2v2h-2zM449.3 288.9h2v2h-2zM489.9 378.2h2v2h-2zM492.7 291.9h2v2h-2zM491.8 327.8h2v2h-2zM502.7 303.8h2v2h-2zM454.5 299.9h2v2h-2zM506.1 182.4h2v2h-2zM539.2 352.5h2v2h-2zM468.6 274.4h2v2h-2zM555.0 389.2h2v2h-2zM512.8 293.4h2v2h-2zM538.0 344.0h2v2h-2zM480.9 283.9h2v2h-2zM489.8 392.9h2v2h-2zM516.1 241.1h2v2h-2zM510.7 230.3h2v2h-2zM514.1 231.4h2v2h-2zM520.7 324.2h2v2h-2zM441.2 284.8h2v2h-2zM507.6 344.4h2v2h-2zM530.4 321.6h2v2h-2zM517.9 300.5h2v2h-2zM515.4 261.6h2v2h-2zM493.9 290.5h2v2h-2zM489.8 172.9h2v2h-2zM496.9 272.5h2v2h-2zM490.8 312.5h2v2h-2zM525.5 231.4h2v2h-2zM498.3 214.4h2v2h-2zM491.7 262.2h2v2h-2zM476.5 375.4h2v2h-2zM496.1 276.2h2v2h-2zM468.2 255.7h2v2h-2zM484.9 283.1h2v2h-2zM514.0 362.2h2v2h-2zM539.5 352.1h2v2h-2zM522.7 296.2h2v2h-2zM535.8 353.7h2v2h-2zM517.8 391.4h2v2h-2zM485.3 345.9h2v2h-2zM488.1 276.5h2v2h-2zM454.2 341.1h2v2h-2zM477.9 288.2h2v2h-2zM498.2 265.8h2v2h-2zM462.4 341.7h2v2h-2zM548.8 324.4h2v2h-2zM454.5 331.6h2v2h-2zM507.1 244.4h2v2h-2zM492.5 257.4h2v2h-2zM505.1 292.3h2v2h-2zM540.0 380.0h2v2h-2zM527.6 295.7h2v2h-2zM489.7 302.6h2v2h-2zM476.9 278.6h2v2h-2zM498.7 261.9h2v2h-2zM470.2 238.5h2v2h-2zM522.1 312.0h2v2h-2zM537.5 273.1h2v2h-2zM488.6 307.2h2v2h-2zM510.0 300.1h2v2h-2zM453.5 226.6h2v2h-2zM512.5 310.2h2v2h-2zM521.2 338.3h2v2h-2zM523.5 197.1h2v2h-2zM507.4 285.0h2v2h-2zM529.3 354.0h2v2h-2zM500.7 325.2h2v2h-2zM461.3 336.6h2v2h-2zM490.0 287.9h2v2h-2zM547.0 357.4h2v2h-2zM509.3 298.1h2v2h-2zM498.6 206.0h2v2h-2zM521.3 275.1h2v2h-2zM480.6 300.2h2v2h-2zM486.0 307.5h2v2h-2zM498.2 295.5h2v2h-2zM506.3 361.6h2v2h-2zM495.8 357.2h2v2h-2zM497.8 362.5h2v2h-2zM497.7 286.5h2v2h-2zM492.9 319.5h2v2h-2zM504.7 320.4h2v2h-2zM460.5 334.3h2v2h-2zM492.8 233.2h2v2h-2zM525.2 287.7h2v2h-2zM515.9 252.0h2v2h-2zM485.8 258.5h2v2h-2zM519.4 292.5h2v2h-2zM522.2 363.8h2v2h-2zM482.6 328.3h2v2h-2zM545.7 264.3h2v2h-2zM469.2 223.7h2v2h-2zM499.2 265.8h2v2h-2zM490.6 287.7h2v2h-2zM510.2 193.3h2v2h-2zM545.4 297.8h2v2h-2zM495.5 301.5h2v2h-2zM485.5 276.8h2v2h-2zM482.8 207.8h2v2h-2zM475.9 250.9h2v2h-2zM535.6 288.1h2v2h-2zM474.0 276.6h2v2h-2zM495.5 270.8h2v2h-2zM497.8 188.9h2v2h-2zM505.9 228.0h2v2h-2zM484.6 340.9h2v2h-2zM481.9 196.5h2v2h-2zM494.7 260.6h2v2h-2zM528.9 259.2h2v2h-2zM482.8 268.9h2v2h-2zM432.6 335.2h2v2h-2zM473.9 320.1h2v2h-2zM502.0 378.0h2v2h-2zM505.4 393.7h2v2h-2zM520.7 325.8h2v2h-2zM508.1 337.8h2v2h-2zM505.7 286.8h2v2h-2zM487.7 194.3h2v2h-2zM506.7 285.6h2v2h-2zM564.1 353.9h2v2h-2zM489.5 355.1h2v2h-2zM499.5 354.3h2v2h-2zM491.0 278.4h2v2h-2zM495.7 310.1h2v2h-2zM522.6 309.5h2v2h-2zM509.1 270.8h2v2h-2zM500.6 285.2h2v2h-2zM457.5 358.7h2v2h-2zM491.9 326.6h2v2h-2zM491.5 247.3h2v2h-2zM506.9 326.1h2v2h-2zM486.6 310.5h2v2h-2zM484.0 296.8h2v2h-2zM471.8 383.7h2v2h-2zM515.5 309.4h2v2h-2zM545.0 351.9h2v2h-2zM535.3 268.7h2v2h-2zM497.6 319.0h2v2h-2zM494.9 313.1h2v2h-2zM519.7 341.6h2v2h-2zM531.9 311.2h2v2h-2zM526.5 350.0h2v2h-2zM514.4 296.6h2v2h-2zM462.4 292.1h2v2h-2zM514.5 279.9h2v2h-2zM538.9 290.1h2v2h-2zM509.0 266.5h2v2h-2zM509.8 217.5h2v2h-2zM494.5 328.9h2v2h-2zM518.3 283.1h2v2h-2zM506.1 270.4h2v2h-2zM489.4 334.8h2v2h-2zM508.2 296.4h2v2h-2zM492.2 264.4h2v2h-2zM504.2 261.4h2v2h-2zM537.6 314.2h2v2h-2zM487.8 246.1h2v2h-2zM549.2 341.2h2v2h-2zM492.6 226.1h2v2h-2zM552.2 338.0h2v2h-2zM488.5 289.2h2v2h-2zM472.9 299.6h2v2h-2zM509.9 270.9h2v2h-2zM497.1 214.7h2v2h-2zM468.2 220.9h2v2h-2zM481.8 167.0h2v2h-2zM472.6 217.7h2v2h-2zM483.2 299.6h2v2h-2zM490.4 286.5h2v2h-2zM490.8 190.9h2v2h-2zM513.6 333.8h2v2h-2zM540.6 282.2h2v2h-2zM473.4 268.0h2v2h-2zM528.5 334.8h2v2h-2zM507.3 353.6h2v2h-2zM502.6 288.9h2v2h-2zM527.4 322.4h2v2h-2zM455.2 249.9h2v2h-2zM486.4 326.6h2v2h-2zM534.1 258.5h2v2h-2zM539.6 366.7h2v2h-2zM473.3 287.5h2v2h-2zM542.8 357.2h2v2h-2zM514.4 367.4h2v2h-2zM515.3 273.6h2v2h-2zM504.4 270.8h2v2h-2zM500.1 353.1h2v2h-2zM474.0 342.6h2v2h-2zM482.8 353.9h2v2h-2zM474.7 272.0h2v2h-2zM519.9 196.9h2v2h-2zM466.6 348.4h2v2h-2zM483.9 339.4h2v2h-2zM506.5 406.1h2v2h-2zM510.3 313.9h2v2h-2zM471.1 358.6h2v2h-2zM499.0 300.9h2v2h-2zM487.1 324.9h2v2h-2zM508.1 358.0h2v2h-2zM513.6 261.8h2v2h-2zM437.8 298.4h2v2h-2zM489.9 344.1h2v2h-2zM507.4 304.7h2v2h-2zM513.3 258.3h2v2h-2zM510.9 188.5h2v2h-2zM506.1 332.6h2v2h-2zM521.2 275.3h2v2h-2zM524.9 329.8h2v2h-2zM511.7 379.2h2v2h-2zM443.1 299.6h2v2h-2zM537.1 328.8h2v2h-2zM482.2 319.3h2v2h-2zM494.7 323.6h2v2h-2zM544.9 390.4h2v2h-2zM482.1 232.9h2v2h-2zM504.1 265.8h2v2h-2zM519.2 289.7h2v2h-2zM456.8 361.5h2v2h-2zM497.3 312.2h2v2h-2zM483.2 255.5h2v2h-2zM475.8 342.0h2v2h-2zM471.3 274.1h2v2h-2zM482.2 189.6h2v2h-2zM468.3 260.5h2v2h-2zM487.6 309.0h2v2h-2zM507.2 243.9h2v2h-2zM516.1 326.3h2v2h-2zM458.4 327.5h2v2h-2zM507.8 301.1h2v2h-2zM495.7 302.6h2v2h-2zM491.6 302.0h2v2h-2zM507.7 308.1h2v2h-2zM511.3 337.8h2v2h-2zM493.3 273.6h2v2h-2zM548.5 349.7h2v2h-2zM517.6 315.1h2v2h-2zM479.9 303.4h2v2h-2zM506.0 188.7h2v2h-2zM475.5 246.6h2v2h-2zM528.0 335.7h2v2h-2zM516.5 202.5h2v2h-2zM492.2 324.1h2v2h-2zM501.5 265.0h2v2h-2zM497.2 378.4h2v2h-2zM507.3 257.9h2v2h-2zM489.7 279.0h2v2h-2zM482.6 299.1h2v2h-2zM508.2 304.9h2v2h-2zM476.3 330.8h2v2h-2zM526.6 281.2h2v2h-2zM490.5 357.5h2v2h-2zM441.0 386.0h2v2h-2zM495.3 169.8h2v2h-2zM502.0 351.4h2v2h-2zM488.9 232.0h2v2h-2zM477.8 311.7h2v2h-2zM490.3 232.0h2v2h-2zM520.1 185.5h2v2h-2zM534.1 249.3h2v2h-2zM484.6 332.0h2v2h-2zM514.0 353.0h2v2h-2zM495.9 279.4h2v2h-2zM481.5 253.1h2v2h-2zM475.3 331.3h2v2h-2zM481.2 313.9h2v2h-2zM496.8 253.1h2v2h-2zM414.0 308.2h2v2h-2zM494.9 218.7h2v2h-2zM496.1 221.0h2v2h-2zM521.1 337.9h2v2h-2zM499.7 314.6h2v2h-2zM508.9 282.0h2v2h-2zM595.6 305.6h2v2h-2zM456.4 304.4h2v2h-2zM413.8 254.1h2v2h-2zM489.8 333.5h2v2h-2zM719.0 424.5h2v2h-2z"/>
<path fill="#669900" d="M464.7 196.2h2v2h-2zM463.3 225.2h2v2h-2zM498.3 241.4h2v2h-2zM489.4 335.0h2v2h-2zM493.8 257.7h2v2h-2zM508.8 278.6h2v2h-2zM500.9 287.0h2v2h-2zM493.3 199.9h2v2h-2zM534.8 296.6h2v2h-2zM483.4 272.9h2v2h-2zM496.5 181.9h2v2h-2zM469.3 322.3h2v2h-2zM520.5 291.5h2v2h-2zM524.6 281.1h2v2h-2zM454.9 332.4h2v2h-2zM507.3 334.2h2v2h-2zM487.9 299.5h2v2h-2zM488.5 323.8h2v2h-2zM508.4 172.1h2v2h-2zM480.9 308.1h2v2h-2zM498.9 328.7h2v2h-2zM475.3 341.5h2v2h-2zM466.7 319.0h2v2h-2zM489.2 222.6h2v2h-2zM476.2 237.6h2v2h-2zM507.5 337.0h2v2h-2zM506.6 312.9h2v2h-2zM497.2 323.8h2v2h-2zM520.6 340.8h2v2h-2zM493.9 209.7h2v2h-2zM502.9 341.4h2v2h-2zM483.0 367.5h2v2h-2zM465.5 263.2h2v2h-2zM497.5 304.2h2v2h-2zM484.4 234.9h2v2h-2zM504.0 236.0h2v2h-2zM498.0 258.8h2v2h-2zM492.3 304.9h2v2h-2zM472.6 327.6h2v2h-2zM509.1 311.5h2v2h-2zM480.4 219.9h2v2h-2zM490.5 212.9h2v2h-2zM506.6 196.3h2v2h-2zM487.6 326.0h2v2h-2zM497.3 314.1h2v2h-2zM524.9 343.7h2v2h-2zM487.0 384.9h2v2h-2zM424.4 283.2h2v2h-2zM492.9 273.5h2v2h-2zM505.7 216.9h2v2h-2zM471.5 231.7h2v2h-2zM523.0 290.3h2v2h-2zM489.4 286.7h2v2h-2zM525.3 243.2h2v2h-2zM495.0 270.9h2v2h-2zM527.9 365.6h2v2h-2zM506.9 265.9h2v2h-2zM521.7 338.5h2v2h-2zM475.0 336.5h2v2h-2zM511.3 256.9h2v2h-2zM480.1 310.0h2v2h-2zM498.7 298.5h2v2h-2zM530.0 354.0h2v2h-2zM518.7 322.6h2v2h-2zM496.4 326.4h2v2h-2zM512.3 318.1h2v2h-2zM527.4 219.5h2v2h-2zM512.4 316.5h2v2h-2zM536.1 355.0h2v2h-2zM494.8 262.4h2v2h-2zM531.6 288.1h2v2h-2zM491.7 273.3h2v2h-2zM507.6 326.8h2v2h-2zM477.0 297.8h2v2h-2zM513.2 230.5h2v2h-2zM512.0 267.5h2v2h-2zM533.7 296.4h2v2h-2zM500.4 328.4h2v2h-2zM469.3 259.2h2v2h-2zM507.0 270.2h2v2h-2zM500.5 264.1h2v2h-2zM473.3 315.9h2v2h-2zM532.4 307.7h2v2h-2zM514.4 339.8h2v2h-2zM473.6 189.2h2v2h-2zM535.6 320.3h2v2h-2zM463.6 287.4h2v2h-2zM479.2 290.3h2v2h-2zM493.3 306.7h2v2h-2zM503.9 362.1h2v2h-2zM462.7 239.8h2v2h-2zM462.9 204.7h2v2h-2zM505.3 301.9h2v2h-2zM499.2 293.6h2v2h-2zM459.5 327.3h2v2h-2zM512.5 298.5h2v2h-2zM480.8 301.8h2v2h-2zM492.7 254.2h2v2h-2zM475.3 287.9h2v2h-2zM451.2 308.6h2v2h-2zM512.8 294.8h2v2h-2zM488.7 294.9h2v2h-2zM505.0 261.1h2v2h-2zM463.4 263.8h2v2h-2zM553.7 249.6h2v2h-2zM450.2 376.9h2v2h-2zM510.3 274.1h2v2h-2zM549.1 306.0h2v2h-2zM495.8 260.8h2v2h-2zM516.0 315.7h2v2h-2zM509.7 308.2h2v2h-2zM516.6 354.6h2v2h-2zM518.6 247.4h2v2h-2zM523.3 320.2h2v2h-2zM501.7 305.8h2v2h-2zM545.4 228.5h2v2h-2zM569.0 282.2h2v2h-2zM459.5 286.6h2v2h-2zM599.0 341.0h2v2h-2zM384.4 359.6h2v2h-2zM507.9 119.0h2v2h-2zM449.8 136.4h2v2h-2zM384.8 157.7h2v2h-2zM616.6 122.8h2v2h-2zM653.4 95.8h2v2h-2zM681.0 85.0h2v2h-2zM683.0 85.0h2v2h-2zM661.0 161.8h2v2h-2zM571.0 199.5h2v2h-2zM547.8 225.5h2v2h-2zM394.6 237.3h2v2h-2zM422.5 235.4h2v2h-2zM432.4 235.4h2v2h-2zM395.3 258.8h2v2h-2zM436.5 258.8h2v2h-2zM441.9 261.7h2v2h-2zM758.9 71.3h2v2h-2zM1007.0 69.5h2v2h-2zM766.9 211.2h2v2h-2zM855.1 213.0h2v2h-2zM758.9 236.2h2v2h-2zM682.6 253.0h2v2h-2zM700.6 363.2h2v2h-2zM620.0 301.0h2v2h-2zM642.0 302.0h2v2h-2zM602.0 330.0h2v2h-2zM628.0 328.0h2v2h-2zM621.0 377.0h2v2h-2z"/>
<path fill="#798600" d="M481.3 232.5h2v2h-2zM489.9 331.9h2v2h-2zM495.2 333.3h2v2h-2zM538.7 354.2h2v2h-2zM512.9 260.6h2v2h-2zM495.4 251.2h2v2h-2zM512.3 332.6h2v2h-2zM499.0 276.8h2v2h-2zM495.2 290.3h2v2h-2zM494.7 303.0h2v2h-2zM543.7 237.0h2v2h-2zM544.1 263.3h2v2h-2zM491.0 265.9h2v2h-2zM480.4 263.4h2v2h-2zM474.3 237.6h2v2h-2zM479.1 302.7h2v2h-2zM454.8 301.8h2v2h-2zM470.2 312.8h2v2h-2zM458.1 272.6h2v2h-2zM452.2 283.3h2v2h-2zM517.7 331.2h2v2h-2zM512.8 423.2h2v2h-2zM491.5 305.5h2v2h-2zM492.6 327.7h2v2h-2zM508.2 302.9h2v2h-2zM508.0 300.6h2v2h-2zM597.2 264.7h2v2h-2zM566.4 271.8h2v2h-2zM465.4 306.6h2v2h-2zM429.1 281.9h2v2h-2zM433.5 159.4h2v2h-2zM490.2 193.6h2v2h-2zM458.2 361.6h2v2h-2zM493.9 351.3h2v2h-2zM504.4 197.4h2v2h-2zM455.5 101.8h2v2h-2zM401.3 136.4h2v2h-2zM414.0 220.8h2v2h-2zM638.0 315.0h2v2h-2zM688.0 347.0h2v2h-2zM618.0 400.0h2v2h-2z"/>
<path fill="#8d7200" d="M509.4 288.5h2v2h-2zM466.3 241.5h2v2h-2zM473.2 229.5h2v2h-2zM461.5 275.3h2v2h-2zM484.6 493.2h2v2h-2zM511.6 354.6h2v2h-2zM463.5 352.6h2v2h-2zM472.3 319.1h2v2h-2zM507.7 398.9h2v2h-2zM473.8 251.0h2v2h-2zM386.6 186.9h2v2h-2zM464.1 319.4h2v2h-2zM575.8 254.2h2v2h-2zM672.5 323.0h2v2h-2z"/>
<path fill="#a05f00" d="M481.6 469.1h2v2h-2zM483.4 219.8h2v2h-2zM489.9 411.7h2v2h-2zM486.1 337.0h2v2h-2zM495.4 241.2h2v2h-2zM520.4 373.7h2v2h-2zM533.3 348.2h2v2h-2zM487.0 249.6h2v2h-2zM418.4 249.3h2v2h-2zM506.4 244.0h2v2h-2zM388.0 28.5h2v2h-2zM398.4 148.8h2v2h-2zM440.0 148.8h2v2h-2zM521.5 147.8h2v2h-2zM534.0 210.0h2v2h-2zM569.0 245.8h2v2h-2zM658.5 301.0h2v2h-2zM666.0 387.5h2v2h-2z"/>
<path fill="#b34c00" d="M542.9 370.0h2v2h-2zM487.7 310.2h2v2h-2zM526.8 408.0h2v2h-2zM491.0 299.7h2v2h-2zM537.6 339.3h2v2h-2zM592.8 420.6h2v2h-2zM496.9 247.6h2v2h-2zM543.3 384.7h2v2h-2zM505.4 330.5h2v2h-2zM505.1 279.3h2v2h-2zM488.3 265.8h2v2h-2zM573.8 184.6h2v2h-2z"/>
<path fill="#c63900" d="M496.7 313.4h2v2h-2z"/>
<path fill="#d92600" d="M505.9 321.7h2v2h-2z"/>
<path fill="#ff0000" d="M483.4 133.9h2v2h-2zM471.0 140.2h2v2h-2zM667.0 271.1h2v2h-2z"/>
<ellipse cx="675.85" cy="369.95" rx="24.9" ry="66" fill="none" stroke="#3cee3c" stroke-width="1.4"/>
<path d="M672.2 369.8h6.8M675.6 366.4v6.8" stroke="#000" stroke-width="1" fill="none"/>
<rect x="678.8" y="327.7" width="2" height="2" fill="#22bb33"/><circle cx="679.8" cy="328.7" r="2.5" fill="none" stroke="#ff3a3a" stroke-width="1.1"/>
<path d="M949.8 414V426.9L952.9 424.1 955.5 429 958 427.7 955.4 423.1 959 422.7Z" fill="#000" stroke="#f4f4f4" stroke-width="0.8" stroke-linejoin="round" style="filter:drop-shadow(0.5px 1px 0.8px rgba(0,0,0,.35))"/>
</svg>
<svg class="abs" style="left:380px;top:658px" width="630" height="95" viewBox="380 658 630 95">
<rect x="381.6" y="659.5" width="623.4" height="90.9" fill="#fff" stroke="#000" stroke-width="1.1"/>
<rect x="663.16" y="659.8" width="15.2" height="52.2" fill="#898989" stroke="#3e3e3e" stroke-width="1.2"/>
<path d="M403.52 711V750.4M425.79 711V750.4M448.06 659.5V750.4M470.33 711V750.4M492.60 711V750.4M514.87 711V750.4M537.14 659.5V750.4M559.41 711V750.4M581.68 711V750.4M603.95 659.5V750.4M626.22 711V750.4M648.49 711V750.4M670.76 711V750.4M693.03 659.5V750.4M715.30 711V750.4M737.57 711V750.4M759.84 659.5V750.4M782.11 711V750.4M804.38 711V750.4M826.65 711V750.4M848.92 659.5V750.4M871.19 711V750.4M893.46 711V750.4M915.73 659.5V750.4M938.00 711V750.4M960.27 711V750.4M982.54 711V750.4" stroke="#000" stroke-width="1" fill="none"/>
<path d="M395.92 659.5h15.2v52.4h-15.2zM418.19 659.5h15.2v52.4h-15.2zM462.73 659.5h15.2v52.4h-15.2zM485.00 659.5h15.2v52.4h-15.2zM507.27 659.5h15.2v52.4h-15.2zM551.81 659.5h15.2v52.4h-15.2zM574.08 659.5h15.2v52.4h-15.2zM618.62 659.5h15.2v52.4h-15.2zM640.89 659.5h15.2v52.4h-15.2zM707.70 659.5h15.2v52.4h-15.2zM729.97 659.5h15.2v52.4h-15.2zM774.51 659.5h15.2v52.4h-15.2zM796.78 659.5h15.2v52.4h-15.2zM819.05 659.5h15.2v52.4h-15.2zM863.59 659.5h15.2v52.4h-15.2zM885.86 659.5h15.2v52.4h-15.2zM930.40 659.5h15.2v52.4h-15.2zM952.67 659.5h15.2v52.4h-15.2zM974.94 659.5h15.2v52.4h-15.2z" fill="#000"/>
</svg>
<svg class="abs" style="left:1008px;top:741px" width="16" height="16" viewBox="0 0 16 16"><path d="M5 14.8L14.8 5M9.2 14.8L14.8 9.2M13.2 14.8L14.8 13.2" stroke="#8c8c8c" stroke-width="1" fill="none"/></svg>
</div></body></html>
